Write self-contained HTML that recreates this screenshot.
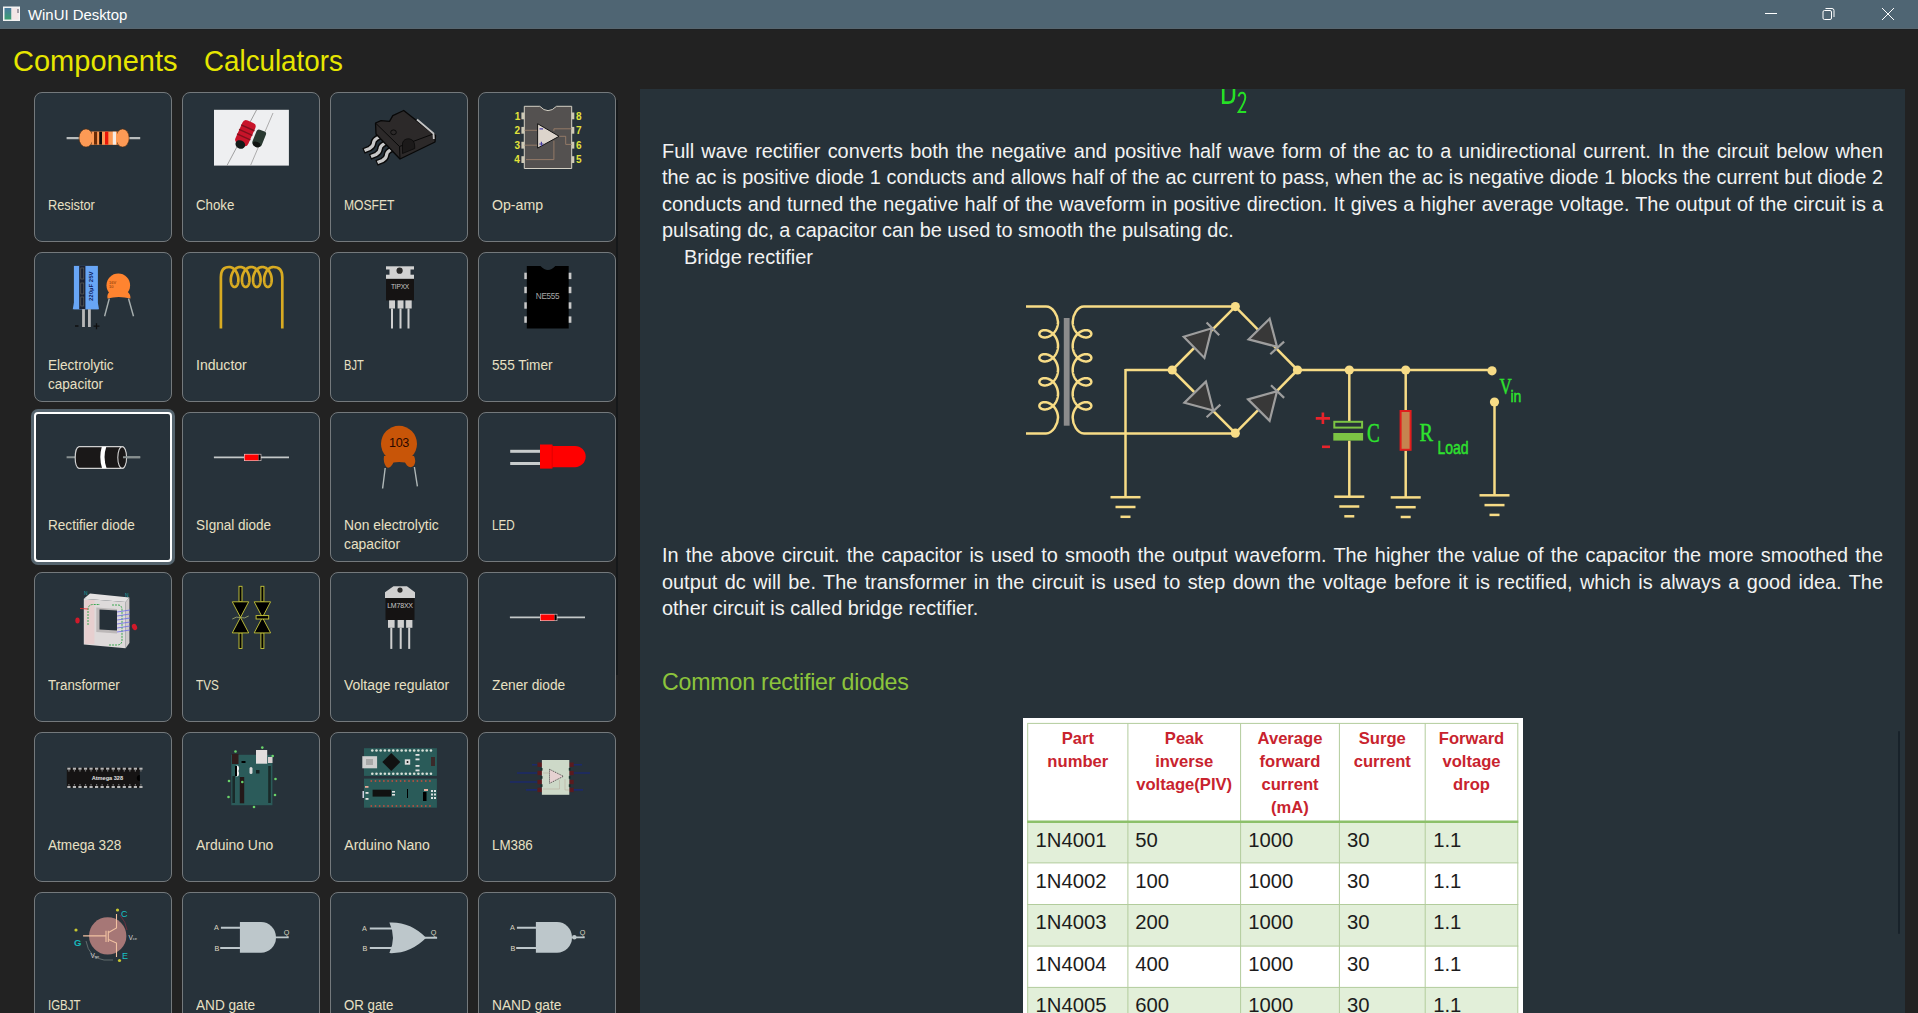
<!DOCTYPE html>
<html><head><meta charset="utf-8"><title>WinUI Desktop</title>
<style>
*{margin:0;padding:0;box-sizing:border-box}
html,body{width:1918px;height:1013px;overflow:hidden;background:#222222;font-family:"Liberation Sans",sans-serif}
.t{position:absolute;white-space:nowrap}
.card{position:absolute;width:138px;height:150px;border:1px solid #74797c;border-radius:8px;background:#27323a;overflow:hidden}
.card.sel{border:2px solid #ffffff;border-radius:4px;box-shadow:0 0 0 3px #56656f}
.lbl{position:absolute;left:13px;font-size:14px;line-height:18.6px;color:#e8e0c4;white-space:nowrap}
.card svg{position:absolute;left:0;top:0}
.para{position:absolute;left:662px;width:1221px;font-size:20px;line-height:26.4px;color:#f2f2f2}
.jl{display:block;text-align:justify;text-align-last:justify;white-space:nowrap}
</style></head><body>
<div style="position:absolute;left:0;top:0;width:1918px;height:29px;background:#4f6573"></div>
<div style="position:absolute;left:0;top:28px;width:1918px;height:1px;background:#58666f"></div>
<div style="position:absolute;left:0;top:29px;width:1918px;height:1px;background:#1c1f22"></div>
<svg style="position:absolute;left:0;top:0" width="30" height="29">
<rect x="3.5" y="7" width="16" height="13.5" fill="#eef0f0" stroke="#f4f4f4" stroke-width="1"/>
<defs><linearGradient id="ig" x1="0" y1="0" x2="0" y2="1"><stop offset="0" stop-color="#4a7aa0"/><stop offset="1" stop-color="#3aa070"/></linearGradient></defs>
<rect x="4.5" y="8" width="7" height="11.5" fill="url(#ig)"/>
<rect x="11.5" y="8" width="7" height="11.5" fill="#f2e6e6"/>
<rect x="17.5" y="9" width="1" height="4" fill="#556"/>
</svg>
<div class="t" style="left:28px;top:4.54px;font-size:14.9px;line-height:20px;color:#ffffff;">WinUI Desktop</div>
<svg style="position:absolute;left:1750px;top:0" width="168" height="29">
<line x1="15" y1="13.5" x2="27" y2="13.5" stroke="#ffffff" stroke-width="1"/>
<rect x="73" y="10.5" width="8.5" height="9" rx="1.5" fill="none" stroke="#ffffff" stroke-width="1"/>
<path d="M75.5 8.5 H82 a2 2 0 0 1 2 2 V17" fill="none" stroke="#ffffff" stroke-width="1"/>
<line x1="132" y1="8" x2="144" y2="20" stroke="#ffffff" stroke-width="1"/>
<line x1="144" y1="8" x2="132" y2="20" stroke="#ffffff" stroke-width="1"/>
</svg>
<div class="t" style="left:12.6px;top:43.01px;font-size:30px;line-height:36px;color:#e6e600;transform:scaleX(0.967);transform-origin:0 0;">Components</div>
<div class="t" style="left:204.3px;top:43.01px;font-size:30px;line-height:36px;color:#e6e600;transform:scaleX(0.925);transform-origin:0 0;">Calculators</div>
<div class="card" style="left:34px;top:92px"><svg width="138" height="150" style="left:-1px;top:-1px"><g transform="translate(-34,-92)">
<line x1="66.6" y1="138.1" x2="140.2" y2="138.1" stroke="#b8bcbc" stroke-width="2.4"/>
<rect x="84" y="131.7" width="40" height="12.9" fill="#fd9a55"/>
<ellipse cx="86" cy="138" rx="7" ry="9.1" fill="#fd9a55" stroke="#4a2a10" stroke-width="0.6"/>
<ellipse cx="122.6" cy="138" rx="6.6" ry="9.1" fill="#fd9a55" stroke="#4a2a10" stroke-width="0.6"/>
<rect x="92" y="131.7" width="25" height="12.9" fill="#fd9a55"/>
<rect x="94" y="131.7" width="3.1" height="12.9" fill="#6a2c08"/>
<rect x="99.2" y="131.7" width="2.8" height="12.9" fill="#0c0c0c"/>
<rect x="105" y="131.7" width="3.3" height="12.9" fill="#ea1608"/>
<rect x="112.8" y="131.7" width="3.2" height="12.9" fill="#f5ebe4"/>
</g></svg><div class="lbl" style="top:102.95px;left:13.3px;transform:scaleX(0.912);transform-origin:0 0">Resistor</div></div>
<div class="card" style="left:182px;top:92px"><svg width="138" height="150" style="left:-1px;top:-1px"><g transform="translate(-182,-92)">
<rect x="214" y="109.8" width="74.9" height="55.8" fill="#eeeff1"/>
<line x1="256.5" y1="110" x2="227" y2="165.5" stroke="#8a8a8a" stroke-width="0.8"/>
<line x1="273" y1="113" x2="250.5" y2="165.5" stroke="#9a9a9a" stroke-width="0.8"/>
<g transform="translate(245,134) rotate(24)">
<rect x="-7" y="-13.5" width="14" height="25" rx="4" fill="#c8142a"/>
<rect x="-7.3" y="-7.5" width="14.6" height="1.4" fill="#80101c"/>
<rect x="-7.3" y="-2.5" width="14.6" height="1.4" fill="#80101c"/>
<rect x="-7.3" y="2.5" width="14.6" height="1.4" fill="#80101c"/>
<ellipse cx="0" cy="11.5" rx="5" ry="4.2" fill="#141a18"/>
</g>
<g transform="translate(259,138.5) rotate(22)">
<rect x="-5" y="-8.5" width="10" height="16" rx="2.5" fill="#2a3a32"/>
<ellipse cx="0" cy="6.5" rx="4" ry="2.6" fill="#101412"/>
</g>
</g></svg><div class="lbl" style="top:102.95px;left:13.3px;transform:scaleX(0.949);transform-origin:0 0">Choke</div></div>
<div class="card" style="left:330px;top:92px"><svg width="138" height="150" style="left:-1px;top:-1px"><g transform="translate(-330,-92)">
<g stroke="#0a0a0a" stroke-linejoin="round">
<path d="M382.5,135 L376.5,138.5 Q373.5,140.5 373.5,143.5 Q373,146.5 369.5,148.5 L363.5,151" fill="none" stroke-width="6.2"/>
<path d="M389,141 L383,144.5 Q380,146.5 380,149.5 Q379.5,152.5 376,154.5 L370,157" fill="none" stroke-width="6.2"/>
<path d="M395.5,147 L389.5,150.5 Q386.5,152.5 386.5,155.5 Q386,158.5 382.5,160.5 L376.5,163" fill="none" stroke-width="6.2"/>
</g>
<g stroke="#c8c8c8" stroke-linecap="butt">
<path d="M381,135.8 L376.5,138.5 Q373.5,140.5 373.5,143.5 Q373,146.5 369.5,148.5 L364.5,150.6" fill="none" stroke-width="3.2"/>
<path d="M387.5,141.8 L383,144.5 Q380,146.5 380,149.5 Q379.5,152.5 376,154.5 L371,156.6" fill="none" stroke-width="3.2"/>
<path d="M394,147.8 L389.5,150.5 Q386.5,152.5 386.5,155.5 Q386,158.5 382.5,160.5 L377.5,162.6" fill="none" stroke-width="3.2"/>
</g>
<path d="M375.5,123 L381,120.6 L389.5,121.4 L392.8,115.6 L403.7,110.5 L435.5,135.5 L435,142 L400,159 L376,134 Z" fill="#2c2929" stroke="#080808" stroke-width="1.3" stroke-linejoin="round"/>
<path d="M376,123.5 L399.5,146.5 L434.5,133.5" fill="none" stroke="#080808" stroke-width="1"/>
<line x1="399.5" y1="146.5" x2="400" y2="159" stroke="#080808" stroke-width="1"/>
<path d="M417,119.5 L433.5,133.5 L433.8,139" fill="none" stroke="#c4c4c4" stroke-width="1.8"/>
<ellipse cx="393.5" cy="132.3" rx="2.8" ry="2.4" fill="none" stroke="#0a0a0a" stroke-width="1"/>
<path d="M402.5,153.5 L402.5,143 Q404,138.5 409,138.8 Q414.5,139.5 414.7,146 L414.7,148.5 Z" fill="#1c1a1a" stroke="#0a0a0a" stroke-width="0.8"/>
</g></svg><div class="lbl" style="top:102.95px;left:13.3px;transform:scaleX(0.866);transform-origin:0 0">MOSFET</div></div>
<div class="card" style="left:478px;top:92px"><svg width="138" height="150" style="left:-1px;top:-1px"><g transform="translate(-478,-92)"><path d="M524.3,106.3 H539.8 Q548,115 556.5,106.3 H571.7 V168.5 H524.3 Z" fill="#545150" stroke="#d4d0c4" stroke-width="1"/><rect x="521.4" y="112.5" width="2.9" height="6.8" fill="#cfcab6"/><rect x="571.7" y="112.5" width="2.6" height="6.8" fill="#cfcab6"/><rect x="521.4" y="126.9" width="2.9" height="6.8" fill="#cfcab6"/><rect x="571.7" y="126.9" width="2.6" height="6.8" fill="#cfcab6"/><rect x="521.4" y="141.79999999999998" width="2.9" height="6.8" fill="#cfcab6"/><rect x="571.7" y="141.79999999999998" width="2.6" height="6.8" fill="#cfcab6"/><rect x="521.4" y="156.2" width="2.9" height="6.8" fill="#cfcab6"/><rect x="571.7" y="156.2" width="2.6" height="6.8" fill="#cfcab6"/><path d="M524.5,130.3 H537.6 M524.5,145.2 H537.6 M526,159.6 H553.9 V140.7 M553.9,128.8 H571.7 M559,136.3 H565.7 V144.4 H571.7 M553.9,128.8 V131" fill="none" stroke="#9a7e6a" stroke-width="0.9"/><path d="M537.6,123.7 V148.1 L559.1,136.3 Z" fill="#dcd4cc" stroke="#151515" stroke-width="1"/><path d="M539.5,128.8 H543" stroke="#4a40a0" stroke-width="1.2"/><path d="M539.3,144 H543.5 M541.4,141.8 V146.2" stroke="#4a40a0" stroke-width="1.2"/><text x="517.5" y="119.5" text-anchor="middle" font-family="Liberation Sans" font-weight="bold" font-size="10" fill="#e2e23a">1</text><text x="517.3" y="134" text-anchor="middle" font-family="Liberation Sans" font-weight="bold" font-size="10" fill="#e2e23a">2</text><text x="517.3" y="149" text-anchor="middle" font-family="Liberation Sans" font-weight="bold" font-size="10" fill="#e2e23a">3</text><text x="517" y="163.2" text-anchor="middle" font-family="Liberation Sans" font-weight="bold" font-size="10" fill="#e2e23a">4</text><text x="578.8" y="119.5" text-anchor="middle" font-family="Liberation Sans" font-weight="bold" font-size="10" fill="#e2e23a">8</text><text x="578.8" y="134" text-anchor="middle" font-family="Liberation Sans" font-weight="bold" font-size="10" fill="#e2e23a">7</text><text x="578.8" y="149" text-anchor="middle" font-family="Liberation Sans" font-weight="bold" font-size="10" fill="#e2e23a">6</text><text x="578.8" y="163.2" text-anchor="middle" font-family="Liberation Sans" font-weight="bold" font-size="10" fill="#e2e23a">5</text></g></svg><div class="lbl" style="top:102.95px;left:13.3px;transform:scaleX(1.010);transform-origin:0 0">Op-amp</div></div>
<div class="card" style="left:34px;top:252px"><svg width="138" height="150" style="left:-1px;top:-1px"><g transform="translate(-34,-252)">
<rect x="73.9" y="265.9" width="24" height="43.3" fill="#68a6f6"/>
<path d="M73.9,303 L72.8,309.2 H99 L97.9,303 Z" fill="#68a6f6"/>
<rect x="79.2" y="265.9" width="6.2" height="43.3" fill="#1c2232"/>
<rect x="80.8" y="268" width="3" height="11" fill="none" stroke="#6a6a60" stroke-width="0.6"/>
<rect x="80.8" y="283" width="3" height="11" fill="none" stroke="#6a6a60" stroke-width="0.6"/>
<rect x="80.8" y="297" width="3" height="9" fill="none" stroke="#6a6a60" stroke-width="0.6"/>
<text transform="translate(93.2,301) rotate(-90)" font-family="Liberation Sans" font-weight="bold" font-size="6" fill="#10205a">220µF 25V</text>
<rect x="82.1" y="309.2" width="2.8" height="17.8" fill="#b8b8b8"/>
<rect x="88" y="309.2" width="2.8" height="17.8" fill="#b8b8b8"/>
<path d="M75,326 H78.5 M93.5,326.2 H99.5 M96.5,323.2 V329.2" stroke="#101010" stroke-width="1.3"/>
<line x1="109.3" y1="298.5" x2="104.6" y2="316.3" stroke="#a8b0b0" stroke-width="1.4"/>
<line x1="128.5" y1="298.5" x2="133.5" y2="316.3" stroke="#a8b0b0" stroke-width="1.4"/>
<circle cx="118.3" cy="285.3" r="11.8" fill="#ff8430"/>
<path d="M107.5,298.5 Q106.5,293 111,291 Q118.5,293 126,291 Q130.7,293 130.5,298.5 Q118.5,295.5 107.5,298.5 Z" fill="#ff8430"/>
<text x="109" y="284" font-family="Liberation Sans" font-size="4" fill="#7a3000">16V</text>
<text x="109" y="287.5" font-family="Liberation Sans" font-size="4" fill="#7a3000">10</text>
</g></svg><div class="lbl" style="top:102.95px;left:13.3px;transform:scaleX(0.968);transform-origin:0 0">Electrolytic<br>capacitor</div></div>
<div class="card" style="left:182px;top:252px"><svg width="138" height="150" style="left:-1px;top:-1px"><g transform="translate(-182,-252)"><path d="M220.9,328.5 V277.0 Q220.9,267.00 229.05,267.00 L229.46,267.01 L229.86,267.05 L230.26,267.11 L230.66,267.20 L231.06,267.31 L231.45,267.45 L231.84,267.61 L232.23,267.80 L232.60,268.01 L232.97,268.24 L233.34,268.49 L233.69,268.76 L234.03,269.06 L234.37,269.38 L234.69,269.71 L235.01,270.06 L235.31,270.43 L235.60,270.82 L235.88,271.22 L236.15,271.64 L236.40,272.07 L236.63,272.52 L236.86,272.97 L237.07,273.44 L237.26,273.91 L237.44,274.39 L237.60,274.88 L237.75,275.37 L237.88,275.87 L238.00,276.37 L238.10,276.87 L238.19,277.38 L238.26,277.88 L238.31,278.38 L238.35,278.87 L238.37,279.36 L238.37,279.85 L238.37,280.33 L238.34,280.80 L238.30,281.26 L238.25,281.71 L238.18,282.14 L238.10,282.57 L238.01,282.98 L237.90,283.37 L237.78,283.75 L237.65,284.12 L237.51,284.46 L237.36,284.78 L237.19,285.09 L237.02,285.38 L236.84,285.64 L236.65,285.88 L236.46,286.10 L236.25,286.30 L236.04,286.47 L235.83,286.62 L235.61,286.75 L235.39,286.85 L235.17,286.92 L234.94,286.97 L234.71,287.00 L234.49,287.00 L234.26,286.97 L234.03,286.92 L233.81,286.85 L233.59,286.75 L233.37,286.62 L233.16,286.47 L232.95,286.30 L232.74,286.10 L232.55,285.88 L232.36,285.64 L232.18,285.38 L232.01,285.09 L231.84,284.78 L231.69,284.46 L231.55,284.12 L231.42,283.75 L231.30,283.37 L231.19,282.98 L231.10,282.57 L231.02,282.14 L230.95,281.71 L230.90,281.26 L230.86,280.80 L230.83,280.33 L230.83,279.85 L230.83,279.36 L230.85,278.87 L230.89,278.38 L230.94,277.88 L231.01,277.38 L231.10,276.87 L231.20,276.37 L231.32,275.87 L231.45,275.37 L231.60,274.88 L231.76,274.39 L231.94,273.91 L232.13,273.44 L232.34,272.97 L232.57,272.52 L232.80,272.07 L233.05,271.64 L233.32,271.22 L233.60,270.82 L233.89,270.43 L234.19,270.06 L234.51,269.71 L234.83,269.38 L235.17,269.06 L235.51,268.76 L235.86,268.49 L236.23,268.24 L236.60,268.01 L236.97,267.80 L237.36,267.61 L237.75,267.45 L238.14,267.31 L238.54,267.20 L238.94,267.11 L239.34,267.05 L239.74,267.01 L240.15,267.00 L240.56,267.01 L240.96,267.05 L241.36,267.11 L241.76,267.20 L242.16,267.31 L242.55,267.45 L242.94,267.61 L243.33,267.80 L243.70,268.01 L244.07,268.24 L244.44,268.49 L244.79,268.76 L245.13,269.06 L245.47,269.38 L245.79,269.71 L246.11,270.06 L246.41,270.43 L246.70,270.82 L246.98,271.22 L247.25,271.64 L247.50,272.07 L247.73,272.52 L247.96,272.97 L248.17,273.44 L248.36,273.91 L248.54,274.39 L248.70,274.88 L248.85,275.37 L248.98,275.87 L249.10,276.37 L249.20,276.87 L249.29,277.38 L249.36,277.88 L249.41,278.38 L249.45,278.87 L249.47,279.36 L249.47,279.85 L249.47,280.33 L249.44,280.80 L249.40,281.26 L249.35,281.71 L249.28,282.14 L249.20,282.57 L249.11,282.98 L249.00,283.37 L248.88,283.75 L248.75,284.12 L248.61,284.46 L248.46,284.78 L248.29,285.09 L248.12,285.38 L247.94,285.64 L247.75,285.88 L247.56,286.10 L247.35,286.30 L247.14,286.47 L246.93,286.62 L246.71,286.75 L246.49,286.85 L246.27,286.92 L246.04,286.97 L245.81,287.00 L245.59,287.00 L245.36,286.97 L245.13,286.92 L244.91,286.85 L244.69,286.75 L244.47,286.62 L244.26,286.47 L244.05,286.30 L243.84,286.10 L243.65,285.88 L243.46,285.64 L243.28,285.38 L243.11,285.09 L242.94,284.78 L242.79,284.46 L242.65,284.12 L242.52,283.75 L242.40,283.37 L242.29,282.98 L242.20,282.57 L242.12,282.14 L242.05,281.71 L242.00,281.26 L241.96,280.80 L241.93,280.33 L241.93,279.85 L241.93,279.36 L241.95,278.87 L241.99,278.38 L242.04,277.88 L242.11,277.38 L242.20,276.87 L242.30,276.37 L242.42,275.87 L242.55,275.37 L242.70,274.88 L242.86,274.39 L243.04,273.91 L243.23,273.44 L243.44,272.97 L243.67,272.52 L243.90,272.07 L244.15,271.64 L244.42,271.22 L244.70,270.82 L244.99,270.43 L245.29,270.06 L245.61,269.71 L245.93,269.38 L246.27,269.06 L246.61,268.76 L246.96,268.49 L247.33,268.24 L247.70,268.01 L248.07,267.80 L248.46,267.61 L248.85,267.45 L249.24,267.31 L249.64,267.20 L250.04,267.11 L250.44,267.05 L250.84,267.01 L251.25,267.00 L251.66,267.01 L252.06,267.05 L252.46,267.11 L252.86,267.20 L253.26,267.31 L253.65,267.45 L254.04,267.61 L254.43,267.80 L254.80,268.01 L255.17,268.24 L255.54,268.49 L255.89,268.76 L256.23,269.06 L256.57,269.38 L256.89,269.71 L257.21,270.06 L257.51,270.43 L257.80,270.82 L258.08,271.22 L258.35,271.64 L258.60,272.07 L258.83,272.52 L259.06,272.97 L259.27,273.44 L259.46,273.91 L259.64,274.39 L259.80,274.88 L259.95,275.37 L260.08,275.87 L260.20,276.37 L260.30,276.87 L260.39,277.38 L260.46,277.88 L260.51,278.38 L260.55,278.87 L260.57,279.36 L260.57,279.85 L260.57,280.33 L260.54,280.80 L260.50,281.26 L260.45,281.71 L260.38,282.14 L260.30,282.57 L260.21,282.98 L260.10,283.37 L259.98,283.75 L259.85,284.12 L259.71,284.46 L259.56,284.78 L259.39,285.09 L259.22,285.38 L259.04,285.64 L258.85,285.88 L258.66,286.10 L258.45,286.30 L258.24,286.47 L258.03,286.62 L257.81,286.75 L257.59,286.85 L257.37,286.92 L257.14,286.97 L256.91,287.00 L256.69,287.00 L256.46,286.97 L256.23,286.92 L256.01,286.85 L255.79,286.75 L255.57,286.62 L255.36,286.47 L255.15,286.30 L254.94,286.10 L254.75,285.88 L254.56,285.64 L254.38,285.38 L254.21,285.09 L254.04,284.78 L253.89,284.46 L253.75,284.12 L253.62,283.75 L253.50,283.37 L253.39,282.98 L253.30,282.57 L253.22,282.14 L253.15,281.71 L253.10,281.26 L253.06,280.80 L253.03,280.33 L253.03,279.85 L253.03,279.36 L253.05,278.87 L253.09,278.38 L253.14,277.88 L253.21,277.38 L253.30,276.87 L253.40,276.37 L253.52,275.87 L253.65,275.37 L253.80,274.88 L253.96,274.39 L254.14,273.91 L254.33,273.44 L254.54,272.97 L254.77,272.52 L255.00,272.07 L255.25,271.64 L255.52,271.22 L255.80,270.82 L256.09,270.43 L256.39,270.06 L256.71,269.71 L257.03,269.38 L257.37,269.06 L257.71,268.76 L258.06,268.49 L258.43,268.24 L258.80,268.01 L259.17,267.80 L259.56,267.61 L259.95,267.45 L260.34,267.31 L260.74,267.20 L261.14,267.11 L261.54,267.05 L261.94,267.01 L262.35,267.00 L262.76,267.01 L263.16,267.05 L263.56,267.11 L263.96,267.20 L264.36,267.31 L264.75,267.45 L265.14,267.61 L265.53,267.80 L265.90,268.01 L266.27,268.24 L266.64,268.49 L266.99,268.76 L267.33,269.06 L267.67,269.38 L267.99,269.71 L268.31,270.06 L268.61,270.43 L268.90,270.82 L269.18,271.22 L269.45,271.64 L269.70,272.07 L269.93,272.52 L270.16,272.97 L270.37,273.44 L270.56,273.91 L270.74,274.39 L270.90,274.88 L271.05,275.37 L271.18,275.87 L271.30,276.37 L271.40,276.87 L271.49,277.38 L271.56,277.88 L271.61,278.38 L271.65,278.87 L271.67,279.36 L271.67,279.85 L271.67,280.33 L271.64,280.80 L271.60,281.26 L271.55,281.71 L271.48,282.14 L271.40,282.57 L271.31,282.98 L271.20,283.37 L271.08,283.75 L270.95,284.12 L270.81,284.46 L270.66,284.78 L270.49,285.09 L270.32,285.38 L270.14,285.64 L269.95,285.88 L269.76,286.10 L269.55,286.30 L269.34,286.47 L269.13,286.62 L268.91,286.75 L268.69,286.85 L268.47,286.92 L268.24,286.97 L268.01,287.00 L267.79,287.00 L267.56,286.97 L267.33,286.92 L267.11,286.85 L266.89,286.75 L266.67,286.62 L266.46,286.47 L266.25,286.30 L266.04,286.10 L265.85,285.88 L265.66,285.64 L265.48,285.38 L265.31,285.09 L265.14,284.78 L264.99,284.46 L264.85,284.12 L264.72,283.75 L264.60,283.37 L264.49,282.98 L264.40,282.57 L264.32,282.14 L264.25,281.71 L264.20,281.26 L264.16,280.80 L264.13,280.33 L264.13,279.85 L264.13,279.36 L264.15,278.87 L264.19,278.38 L264.24,277.88 L264.31,277.38 L264.40,276.87 L264.50,276.37 L264.62,275.87 L264.75,275.37 L264.90,274.88 L265.06,274.39 L265.24,273.91 L265.43,273.44 L265.64,272.97 L265.87,272.52 L266.10,272.07 L266.35,271.64 L266.62,271.22 L266.90,270.82 L267.19,270.43 L267.49,270.06 L267.81,269.71 L268.13,269.38 L268.47,269.06 L268.81,268.76 L269.16,268.49 L269.53,268.24 L269.90,268.01 L270.27,267.80 L270.66,267.61 L271.05,267.45 L271.44,267.31 L271.84,267.20 L272.24,267.11 L272.64,267.05 L273.04,267.01 L273.45,267.00 Q282.3,267.00 282.3,277.0 V328.5" fill="none" stroke="#d8ab22" stroke-width="2.7"/></g></svg><div class="lbl" style="top:102.95px;left:13.3px;transform:scaleX(1.004);transform-origin:0 0">Inductor</div></div>
<div class="card" style="left:330px;top:252px"><svg width="138" height="150" style="left:-1px;top:-1px"><g transform="translate(-330,-252)"><rect x="386" y="266.3" width="28" height="12.599999999999966" fill="#d2d2d2"/><rect x="386" y="269.5" width="3.5" height="5.2" fill="#263038"/><rect x="410.5" y="269.5" width="3.5" height="5.2" fill="#263038"/><circle cx="399.6" cy="270.7" r="3.1" fill="#2a2a2a"/><rect x="386" y="278.9" width="28" height="21.5" fill="#151313"/><text x="400" y="288.7" text-anchor="middle" font-family="Liberation Sans" font-size="6.6" fill="#c8c8c8" letter-spacing="-0.2">TIPXX</text><rect x="389.1" y="300.4" width="5.899999999999977" height="8.100000000000023" fill="#cfcfcf"/><rect x="391" y="308.5" width="2" height="20.0" fill="#cfcfcf"/><rect x="397.6" y="300.4" width="5.899999999999977" height="8.100000000000023" fill="#cfcfcf"/><rect x="399.5" y="308.5" width="2" height="20.0" fill="#cfcfcf"/><rect x="405.4" y="300.4" width="6.300000000000011" height="8.100000000000023" fill="#cfcfcf"/><rect x="407.5" y="308.5" width="2" height="20.0" fill="#cfcfcf"/></g></svg><div class="lbl" style="top:102.95px;left:13.3px;transform:scaleX(0.791);transform-origin:0 0">BJT</div></div>
<div class="card" style="left:478px;top:252px"><svg width="138" height="150" style="left:-1px;top:-1px"><g transform="translate(-478,-252)"><path d="M526.8,265.9 H540.5 Q548,274 555.3,265.9 H568.7 V328.5 H526.8 Z" fill="#000000"/><rect x="524.3" y="272.7" width="2.5" height="6.4" fill="#c8c8c8"/><rect x="568.7" y="272.7" width="2.7" height="6.4" fill="#c8c8c8"/><rect x="524.3" y="286.8" width="2.5" height="6.4" fill="#c8c8c8"/><rect x="568.7" y="286.8" width="2.7" height="6.4" fill="#c8c8c8"/><rect x="524.3" y="302.3" width="2.5" height="6.4" fill="#c8c8c8"/><rect x="568.7" y="302.3" width="2.7" height="6.4" fill="#c8c8c8"/><rect x="524.3" y="316.40000000000003" width="2.5" height="6.4" fill="#c8c8c8"/><rect x="568.7" y="316.40000000000003" width="2.7" height="6.4" fill="#c8c8c8"/><text x="547.6" y="299.3" text-anchor="middle" font-family="Liberation Sans" font-size="8.2" fill="#a8a8a8" letter-spacing="-0.3">NE555</text></g></svg><div class="lbl" style="top:102.95px;left:13.3px;transform:scaleX(0.972);transform-origin:0 0">555 Timer</div></div>
<div class="card sel" style="left:34px;top:412px"><svg width="138" height="150" style="left:-2px;top:-2px"><g transform="translate(-34,-412)">
<line x1="66.6" y1="457.3" x2="140.2" y2="457.3" stroke="#889090" stroke-width="2"/>
<path d="M79,446.6 H122.2 A4.4,11 0 0 1 122.2,468.4 H79 A4.4,11 0 0 1 79,446.6 Z" fill="#1a1818" stroke="#cfcfcf" stroke-width="1.2"/>
<ellipse cx="122.2" cy="457.5" rx="4.4" ry="10.9" fill="#1a1818" stroke="#cfcfcf" stroke-width="1.1"/>
<line x1="123" y1="457.3" x2="140.2" y2="457.3" stroke="#889090" stroke-width="2"/>
<path d="M101.8,446.8 H106.3 Q102.6,457.5 106.6,468.2 H102.1 Q98.6,457.5 101.8,446.8 Z" fill="#ffffff"/>
</g></svg><div class="lbl" style="top:101.95px;left:12.3px;transform:scaleX(0.970);transform-origin:0 0">Rectifier diode</div></div>
<div class="card" style="left:182px;top:412px"><svg width="138" height="150" style="left:-1px;top:-1px"><g transform="translate(-182,-412)"><line x1="213.9" y1="457.4" x2="289" y2="457.4" stroke="#c4c8c8" stroke-width="1.9"/><rect x="244" y="453.9" width="17.3" height="7.1" fill="#e8d8d8"/><rect x="244.6" y="454.5" width="13.9" height="5.9" fill="#ff0000"/><rect x="258.5" y="454.5" width="2.2" height="5.9" fill="#000000"/></g></svg><div class="lbl" style="top:102.95px;left:13.3px;transform:scaleX(0.964);transform-origin:0 0">SIgnal diode</div></div>
<div class="card" style="left:330px;top:412px"><svg width="138" height="150" style="left:-1px;top:-1px"><g transform="translate(-330,-412)">
<line x1="385.2" y1="468" x2="382.6" y2="488.5" stroke="#b0b8b8" stroke-width="1.4"/>
<line x1="414.4" y1="467" x2="417.4" y2="486.3" stroke="#b0b8b8" stroke-width="1.4"/>
<circle cx="399" cy="443.8" r="18" fill="#c85508"/>
<path d="M384,456 Q383,462 386,466.5 Q389,469.5 392,465 L393.5,462.5 Q399,461.5 405,462.5 L407,465.5 Q410.5,469 414,465.5 Q416.5,461 414,456 Z" fill="#c85508"/>
<text x="399" y="446.5" text-anchor="middle" font-family="Liberation Sans" font-size="12.6" fill="#2a0800" letter-spacing="-0.3">103</text>
</g></svg><div class="lbl" style="top:102.95px;left:13.3px;transform:scaleX(0.989);transform-origin:0 0">Non electrolytic<br>capacitor</div></div>
<div class="card" style="left:478px;top:412px"><svg width="138" height="150" style="left:-1px;top:-1px"><g transform="translate(-478,-412)">
<rect x="510.2" y="449.8" width="30" height="3" fill="#c8cccc"/>
<rect x="510.2" y="462" width="30" height="3" fill="#c8cccc"/>
<rect x="540" y="444.5" width="12.4" height="24.1" fill="#ff0000"/>
<path d="M552,445.9 H575 A10.7,10.65 0 0 1 575,467.2 H552 Z" fill="#ff0000"/>
<line x1="552.2" y1="445" x2="552.2" y2="468" stroke="#d80000" stroke-width="0.8"/>
</g></svg><div class="lbl" style="top:102.95px;left:13.3px;transform:scaleX(0.834);transform-origin:0 0">LED</div></div>
<div class="card" style="left:34px;top:572px"><svg width="138" height="150" style="left:-1px;top:-1px"><g transform="translate(-34,-572)">
<path d="M83.8,598.8 L90,593.6 L129.4,597.4 L125.6,601.9 Z" fill="#e4e2e2"/>
<path d="M125.6,601.9 L129.4,597.4 L129.4,643 L125.6,648.2 Z" fill="#cfcaca"/>
<path d="M83.8,598.8 L125.6,601.9 L125.6,648.2 L83.8,644.4 Z" fill="#dedada"/>
<rect x="84.5" y="600" width="10" height="44" fill="#e9cccc" opacity="0.8"/>
<path d="M96.3,607.5 L117,609 L117,633.4 L96.3,632 Z" fill="#bcb8b8"/>
<path d="M99.5,609.5 L117,610.5 L117,630.5 L99.5,629.5 Z" fill="#263038"/>
<path d="M88,625 V610 Q88,604.5 93,604.5 H100" fill="none" stroke="#3aa850" stroke-width="1" stroke-dasharray="2,1"/>
<path d="M112,605 H118 Q122,605 122,610 V640 Q122,645 117,645 H108" fill="none" stroke="#3aa850" stroke-width="1" stroke-dasharray="2,1"/>
<g stroke="#6a6ae8" stroke-width="0.8">
<line x1="117" y1="612" x2="130" y2="610"/><line x1="117" y1="616" x2="130" y2="614"/><line x1="117" y1="620" x2="130" y2="618"/>
<line x1="117" y1="624" x2="130" y2="622"/><line x1="117" y1="628" x2="130" y2="626"/><line x1="117" y1="632" x2="130" y2="630"/>
</g>
<line x1="80" y1="608.5" x2="88" y2="609" stroke="#e03030" stroke-width="0.9"/>
<ellipse cx="77.5" cy="620.5" rx="2.2" ry="3" fill="#d01a2a"/>
<ellipse cx="134.5" cy="627" rx="2.5" ry="3.2" fill="#d01a2a" transform="rotate(-25 134.5 627)"/>
<text x="84" y="595" font-family="Liberation Sans" font-size="5" fill="#1aa0a0">N</text>
<text x="125" y="597" font-family="Liberation Sans" font-size="5" fill="#1aa0a0">N</text>
</g></svg><div class="lbl" style="top:102.95px;left:13.3px;transform:scaleX(0.947);transform-origin:0 0">Transformer</div></div>
<div class="card" style="left:182px;top:572px"><svg width="138" height="150" style="left:-1px;top:-1px"><g transform="translate(-182,-572)"><rect x="239.0" y="586.3" width="3" height="15.5" fill="#000" stroke="#c8c83a" stroke-width="0.9"/><rect x="239.0" y="632.9" width="3" height="15.6" fill="#000" stroke="#c8c83a" stroke-width="0.9"/><path d="M232.3,601.8 H248.7 L240.5,617.4 Z" fill="#000" stroke="#c8c83a" stroke-width="0.9"/><path d="M232.3,632.9 H248.7 L240.5,617.4 Z" fill="#000" stroke="#c8c83a" stroke-width="0.9"/><path d="M232.3,619 Q236.5,616 240.5,617.6 Q244.5,619 248.7,616" fill="none" stroke="#a8b070" stroke-width="0.8"/><rect x="260.9" y="586.3" width="3" height="15.5" fill="#000" stroke="#c8c83a" stroke-width="0.9"/><rect x="260.9" y="632.9" width="3" height="15.6" fill="#000" stroke="#c8c83a" stroke-width="0.9"/><path d="M254.2,601.8 H270.59999999999997 L262.4,617.4 Z" fill="#000" stroke="#c8c83a" stroke-width="0.9"/><path d="M254.2,632.9 H270.59999999999997 L262.4,617.4 Z" fill="#000" stroke="#c8c83a" stroke-width="0.9"/><rect x="256.09999999999997" y="615.6" width="12.6" height="3.4" fill="#000" stroke="#c8c83a" stroke-width="0.9"/></g></svg><div class="lbl" style="top:102.95px;left:13.3px;transform:scaleX(0.834);transform-origin:0 0">TVS</div></div>
<div class="card" style="left:330px;top:572px"><svg width="138" height="150" style="left:-1px;top:-1px"><g transform="translate(-330,-572)"><path d="M385,592.1999999999999 L393.5,586.3 H406.9 L415,592.1999999999999 V598.1 H385 Z" fill="#d0d0d0"/><circle cx="400" cy="590.0999999999999" r="2.6" fill="#2a2a2a"/><rect x="385.5" y="598.1" width="29" height="21.899999999999977" fill="#151313"/><text x="400" y="607.9" text-anchor="middle" font-family="Liberation Sans" font-size="7" fill="#c8c8c8" letter-spacing="-0.2">LM78XX</text><rect x="388" y="620" width="6.600000000000023" height="7.7999999999999545" fill="#cfcfcf"/><rect x="390.3" y="627.8" width="2" height="21.100000000000023" fill="#cfcfcf"/><rect x="397.6" y="620" width="6.2999999999999545" height="7.7999999999999545" fill="#cfcfcf"/><rect x="399.7" y="627.8" width="2" height="21.100000000000023" fill="#cfcfcf"/><rect x="406.1" y="620" width="6.2999999999999545" height="7.7999999999999545" fill="#cfcfcf"/><rect x="408.2" y="627.8" width="2" height="21.100000000000023" fill="#cfcfcf"/></g></svg><div class="lbl" style="top:102.95px;left:13.3px;transform:scaleX(0.994);transform-origin:0 0">Voltage regulator</div></div>
<div class="card" style="left:478px;top:572px"><svg width="138" height="150" style="left:-1px;top:-1px"><g transform="translate(-478,-572)"><line x1="509.9" y1="617.4" x2="585" y2="617.4" stroke="#c4c8c8" stroke-width="1.9"/><rect x="540" y="613.9" width="17.3" height="7.1" fill="#e8d8d8"/><rect x="540.6" y="614.5" width="13.9" height="5.9" fill="#ff0000"/><rect x="554.5" y="614.5" width="2.2" height="5.9" fill="#000000"/></g></svg><div class="lbl" style="top:102.95px;left:13.3px;transform:scaleX(0.980);transform-origin:0 0">Zener diode</div></div>
<div class="card" style="left:34px;top:732px"><svg width="138" height="150" style="left:-1px;top:-1px"><g transform="translate(-34,-732)"><rect x="66.8" y="767.7" width="73" height="20.2" fill="#161414"/><rect x="67.30000000000001" y="767.7" width="3.2" height="2" fill="#b8b8b8"/><rect x="67.30000000000001" y="786" width="3.2" height="2" fill="#b8b8b8"/><rect x="68.30000000000001" y="770" width="1.2" height="1.6" fill="#707070"/><rect x="68.30000000000001" y="784" width="1.2" height="1.6" fill="#707070"/><rect x="72.84000000000002" y="767.7" width="3.2" height="2" fill="#b8b8b8"/><rect x="72.84000000000002" y="786" width="3.2" height="2" fill="#b8b8b8"/><rect x="73.84000000000002" y="770" width="1.2" height="1.6" fill="#707070"/><rect x="73.84000000000002" y="784" width="1.2" height="1.6" fill="#707070"/><rect x="78.38000000000001" y="767.7" width="3.2" height="2" fill="#b8b8b8"/><rect x="78.38000000000001" y="786" width="3.2" height="2" fill="#b8b8b8"/><rect x="79.38000000000001" y="770" width="1.2" height="1.6" fill="#707070"/><rect x="79.38000000000001" y="784" width="1.2" height="1.6" fill="#707070"/><rect x="83.92000000000002" y="767.7" width="3.2" height="2" fill="#b8b8b8"/><rect x="83.92000000000002" y="786" width="3.2" height="2" fill="#b8b8b8"/><rect x="84.92000000000002" y="770" width="1.2" height="1.6" fill="#707070"/><rect x="84.92000000000002" y="784" width="1.2" height="1.6" fill="#707070"/><rect x="89.46000000000001" y="767.7" width="3.2" height="2" fill="#b8b8b8"/><rect x="89.46000000000001" y="786" width="3.2" height="2" fill="#b8b8b8"/><rect x="90.46000000000001" y="770" width="1.2" height="1.6" fill="#707070"/><rect x="90.46000000000001" y="784" width="1.2" height="1.6" fill="#707070"/><rect x="95.00000000000001" y="767.7" width="3.2" height="2" fill="#b8b8b8"/><rect x="95.00000000000001" y="786" width="3.2" height="2" fill="#b8b8b8"/><rect x="96.00000000000001" y="770" width="1.2" height="1.6" fill="#707070"/><rect x="96.00000000000001" y="784" width="1.2" height="1.6" fill="#707070"/><rect x="100.54000000000002" y="767.7" width="3.2" height="2" fill="#b8b8b8"/><rect x="100.54000000000002" y="786" width="3.2" height="2" fill="#b8b8b8"/><rect x="101.54000000000002" y="770" width="1.2" height="1.6" fill="#707070"/><rect x="101.54000000000002" y="784" width="1.2" height="1.6" fill="#707070"/><rect x="106.08000000000001" y="767.7" width="3.2" height="2" fill="#b8b8b8"/><rect x="106.08000000000001" y="786" width="3.2" height="2" fill="#b8b8b8"/><rect x="107.08000000000001" y="770" width="1.2" height="1.6" fill="#707070"/><rect x="107.08000000000001" y="784" width="1.2" height="1.6" fill="#707070"/><rect x="111.62" y="767.7" width="3.2" height="2" fill="#b8b8b8"/><rect x="111.62" y="786" width="3.2" height="2" fill="#b8b8b8"/><rect x="112.62" y="770" width="1.2" height="1.6" fill="#707070"/><rect x="112.62" y="784" width="1.2" height="1.6" fill="#707070"/><rect x="117.16000000000001" y="767.7" width="3.2" height="2" fill="#b8b8b8"/><rect x="117.16000000000001" y="786" width="3.2" height="2" fill="#b8b8b8"/><rect x="118.16000000000001" y="770" width="1.2" height="1.6" fill="#707070"/><rect x="118.16000000000001" y="784" width="1.2" height="1.6" fill="#707070"/><rect x="122.70000000000002" y="767.7" width="3.2" height="2" fill="#b8b8b8"/><rect x="122.70000000000002" y="786" width="3.2" height="2" fill="#b8b8b8"/><rect x="123.70000000000002" y="770" width="1.2" height="1.6" fill="#707070"/><rect x="123.70000000000002" y="784" width="1.2" height="1.6" fill="#707070"/><rect x="128.24" y="767.7" width="3.2" height="2" fill="#b8b8b8"/><rect x="128.24" y="786" width="3.2" height="2" fill="#b8b8b8"/><rect x="129.24" y="770" width="1.2" height="1.6" fill="#707070"/><rect x="129.24" y="784" width="1.2" height="1.6" fill="#707070"/><rect x="133.78" y="767.7" width="3.2" height="2" fill="#b8b8b8"/><rect x="133.78" y="786" width="3.2" height="2" fill="#b8b8b8"/><rect x="134.78" y="770" width="1.2" height="1.6" fill="#707070"/><rect x="134.78" y="784" width="1.2" height="1.6" fill="#707070"/><rect x="139.32000000000002" y="767.7" width="3.2" height="2" fill="#b8b8b8"/><rect x="139.32000000000002" y="786" width="3.2" height="2" fill="#b8b8b8"/><rect x="140.32000000000002" y="770" width="1.2" height="1.6" fill="#707070"/><rect x="140.32000000000002" y="784" width="1.2" height="1.6" fill="#707070"/><path d="M139.8,775 A3,3 0 0 0 139.8,781" fill="#000"/><text x="107.4" y="779.8" text-anchor="middle" font-family="Liberation Sans" font-weight="bold" font-size="5.6" fill="#e0e0e0">Atmega 328</text></g></svg><div class="lbl" style="top:102.95px;left:13.3px;transform:scaleX(0.970);transform-origin:0 0">Atmega 328</div></div>
<div class="card" style="left:182px;top:732px"><svg width="138" height="150" style="left:-1px;top:-1px"><g transform="translate(-182,-732)"><rect x="231.3" y="754.8" width="41.1" height="50.4" fill="#2b5b5a"/><rect x="256" y="750" width="11.2" height="13.7" fill="#e2dede"/><rect x="268" y="757" width="4.5" height="6" fill="#d8d0d0"/><rect x="232" y="754" width="6.5" height="10" fill="#301c1c"/><rect x="239.8" y="777" width="4.4" height="26.3" fill="#241818"/><rect x="232.4" y="776" width="2.6" height="27" fill="#1a2a2a"/><rect x="268.2" y="766" width="2.6" height="37" fill="#1a2a2a"/><ellipse cx="237" cy="768.5" rx="2" ry="3" fill="#f0f0f0"/><ellipse cx="237" cy="773.5" rx="2" ry="3" fill="#f0f0f0"/><rect x="235" y="766" width="2" height="10" fill="#000"/><rect x="249.5" y="767" width="3" height="7" rx="1.5" fill="#d8d8d8"/><rect x="241.5" y="761" width="4" height="2" fill="#000"/><rect x="256" y="770" width="3.5" height="3.5" fill="#152020"/><circle cx="235.5" cy="751.5" r="1.3" fill="#6ad46a"/><circle cx="262.3" cy="747.6" r="1.3" fill="#6ad46a"/><circle cx="272.7" cy="756" r="1.3" fill="#6ad46a"/><circle cx="229" cy="781" r="1.3" fill="#6ad46a"/><circle cx="275.5" cy="779" r="1.3" fill="#6ad46a"/><circle cx="228.5" cy="797" r="1.3" fill="#6ad46a"/><circle cx="275" cy="795" r="1.3" fill="#6ad46a"/><circle cx="254" cy="807" r="1.3" fill="#6ad46a"/><circle cx="242.3" cy="782" r="1.3" fill="#6ad46a"/></g></svg><div class="lbl" style="top:102.95px;left:13.3px;transform:scaleX(0.994);transform-origin:0 0">Arduino Uno</div></div>
<div class="card" style="left:330px;top:732px"><svg width="138" height="150" style="left:-1px;top:-1px"><g transform="translate(-330,-732)"><rect x="364" y="748.2" width="72.9" height="27.7" fill="#2a5b59"/><rect x="364" y="778.6" width="72.9" height="29.1" fill="#2a5b59"/><circle cx="372.30" cy="750.5" r="1.3" fill="#d8e0d8"/><circle cx="372.30" cy="773.8" r="1.3" fill="#d8e0d8"/><circle cx="371.30" cy="781" r="0.9" fill="#b85040"/><circle cx="371.30" cy="806" r="0.9" fill="#b85040"/><circle cx="376.49" cy="750.5" r="1.3" fill="#d8e0d8"/><circle cx="376.49" cy="773.8" r="1.3" fill="#d8e0d8"/><circle cx="375.49" cy="781" r="0.9" fill="#b85040"/><circle cx="375.49" cy="806" r="0.9" fill="#b85040"/><circle cx="380.68" cy="750.5" r="1.3" fill="#d8e0d8"/><circle cx="380.68" cy="773.8" r="1.3" fill="#d8e0d8"/><circle cx="379.68" cy="781" r="0.9" fill="#b85040"/><circle cx="379.68" cy="806" r="0.9" fill="#b85040"/><circle cx="384.87" cy="750.5" r="1.3" fill="#d8e0d8"/><circle cx="384.87" cy="773.8" r="1.3" fill="#d8e0d8"/><circle cx="383.87" cy="781" r="0.9" fill="#b85040"/><circle cx="383.87" cy="806" r="0.9" fill="#b85040"/><circle cx="389.06" cy="750.5" r="1.3" fill="#d8e0d8"/><circle cx="389.06" cy="773.8" r="1.3" fill="#d8e0d8"/><circle cx="388.06" cy="781" r="0.9" fill="#b85040"/><circle cx="388.06" cy="806" r="0.9" fill="#b85040"/><circle cx="393.25" cy="750.5" r="1.3" fill="#d8e0d8"/><circle cx="393.25" cy="773.8" r="1.3" fill="#d8e0d8"/><circle cx="392.25" cy="781" r="0.9" fill="#b85040"/><circle cx="392.25" cy="806" r="0.9" fill="#b85040"/><circle cx="397.44" cy="750.5" r="1.3" fill="#d8e0d8"/><circle cx="397.44" cy="773.8" r="1.3" fill="#d8e0d8"/><circle cx="396.44" cy="781" r="0.9" fill="#b85040"/><circle cx="396.44" cy="806" r="0.9" fill="#b85040"/><circle cx="401.63" cy="750.5" r="1.3" fill="#d8e0d8"/><circle cx="401.63" cy="773.8" r="1.3" fill="#d8e0d8"/><circle cx="400.63" cy="781" r="0.9" fill="#b85040"/><circle cx="400.63" cy="806" r="0.9" fill="#b85040"/><circle cx="405.82" cy="750.5" r="1.3" fill="#d8e0d8"/><circle cx="405.82" cy="773.8" r="1.3" fill="#d8e0d8"/><circle cx="404.82" cy="781" r="0.9" fill="#b85040"/><circle cx="404.82" cy="806" r="0.9" fill="#b85040"/><circle cx="410.01" cy="750.5" r="1.3" fill="#d8e0d8"/><circle cx="410.01" cy="773.8" r="1.3" fill="#d8e0d8"/><circle cx="409.01" cy="781" r="0.9" fill="#b85040"/><circle cx="409.01" cy="806" r="0.9" fill="#b85040"/><circle cx="414.20" cy="750.5" r="1.3" fill="#d8e0d8"/><circle cx="414.20" cy="773.8" r="1.3" fill="#d8e0d8"/><circle cx="413.20" cy="781" r="0.9" fill="#b85040"/><circle cx="413.20" cy="806" r="0.9" fill="#b85040"/><circle cx="418.39" cy="750.5" r="1.3" fill="#d8e0d8"/><circle cx="418.39" cy="773.8" r="1.3" fill="#d8e0d8"/><circle cx="417.39" cy="781" r="0.9" fill="#b85040"/><circle cx="417.39" cy="806" r="0.9" fill="#b85040"/><circle cx="422.58" cy="750.5" r="1.3" fill="#d8e0d8"/><circle cx="422.58" cy="773.8" r="1.3" fill="#d8e0d8"/><circle cx="421.58" cy="781" r="0.9" fill="#b85040"/><circle cx="421.58" cy="806" r="0.9" fill="#b85040"/><circle cx="426.77" cy="750.5" r="1.3" fill="#d8e0d8"/><circle cx="426.77" cy="773.8" r="1.3" fill="#d8e0d8"/><circle cx="425.77" cy="781" r="0.9" fill="#b85040"/><circle cx="425.77" cy="806" r="0.9" fill="#b85040"/><circle cx="430.96" cy="750.5" r="1.3" fill="#d8e0d8"/><circle cx="430.96" cy="773.8" r="1.3" fill="#d8e0d8"/><circle cx="429.96" cy="781" r="0.9" fill="#b85040"/><circle cx="429.96" cy="806" r="0.9" fill="#b85040"/><path d="M391.3,753 L400.3,762 L391.3,771 L382.3,762 Z" fill="#111"/><rect x="362.3" y="756.2" width="14.8" height="12.1" fill="#cfcfcf"/><rect x="366" y="759" width="7" height="6" fill="#a8a8a8"/><rect x="404.8" y="759.3" width="5.4" height="5.4" fill="#dcdcdc"/><circle cx="407.5" cy="762" r="1" fill="#111"/><rect x="415.5" y="754" width="4" height="1.8" fill="#e0e0e0"/><rect x="415.5" y="758.5" width="4" height="1.8" fill="#e0e0e0"/><rect x="415.5" y="765" width="4" height="1.8" fill="#e0e0e0"/><rect x="415.5" y="769.5" width="4" height="1.8" fill="#e0e0e0"/><rect x="431" y="757" width="4" height="9" fill="#3a2a2a"/><rect x="372.6" y="789.7" width="18.7" height="6.9" fill="#111"/><rect x="365" y="786" width="3.5" height="1.8" fill="#e8a898"/><rect x="365.5" y="792" width="3" height="1.8" fill="#e0e0e0"/><rect x="365.5" y="798" width="3" height="1.8" fill="#e0e0e0"/><rect x="362.5" y="791" width="1.5" height="7" fill="#d0d0e0"/><rect x="392" y="791" width="3" height="1.6" fill="#e0e0e0"/><rect x="392" y="794" width="3" height="1.6" fill="#e0e0e0"/><rect x="407" y="789" width="1" height="9" fill="#000"/><rect x="423" y="792" width="3.5" height="9" fill="#000"/><rect x="424" y="789" width="4" height="2" fill="#e8b0a0"/><g fill="#d8e0e0"><rect x="431" y="790" width="2" height="2"/><rect x="434" y="790" width="2" height="2"/><rect x="431" y="793.5" width="2" height="2"/><rect x="434" y="793.5" width="2" height="2"/><rect x="431" y="797" width="2" height="2"/><rect x="434" y="797" width="2" height="2"/></g></g></svg><div class="lbl" style="top:102.95px;left:13.3px;transform:scaleX(1.000);transform-origin:0 0">Arduino Nano</div></div>
<div class="card" style="left:478px;top:732px"><svg width="138" height="150" style="left:-1px;top:-1px"><g transform="translate(-478,-732)"><line x1="532" y1="764.7" x2="537" y2="764.7" stroke="#1c2a6a" stroke-width="1.6"/><line x1="517" y1="773" x2="537" y2="773" stroke="#1c2a6a" stroke-width="1.6"/><line x1="510" y1="782" x2="537" y2="782" stroke="#1c2a6a" stroke-width="1.6"/><line x1="526" y1="789.9" x2="537" y2="789.9" stroke="#1c2a6a" stroke-width="1.6"/><line x1="573" y1="764.7" x2="582" y2="764.7" stroke="#1c2a6a" stroke-width="1.6"/><line x1="573" y1="773" x2="590" y2="773" stroke="#1c2a6a" stroke-width="1.6"/><line x1="573" y1="789.9" x2="583" y2="789.9" stroke="#1c2a6a" stroke-width="1.6"/><rect x="537.5" y="762.5" width="4.5" height="4.4" fill="#5a1a1e"/><rect x="569.2" y="762.5" width="4.5" height="4.4" fill="#5a1a1e"/><rect x="537.5" y="770.8" width="4.5" height="4.4" fill="#5a1a1e"/><rect x="569.2" y="770.8" width="4.5" height="4.4" fill="#5a1a1e"/><rect x="537.5" y="779.8" width="4.5" height="4.4" fill="#5a1a1e"/><rect x="569.2" y="779.8" width="4.5" height="4.4" fill="#5a1a1e"/><rect x="537.5" y="787.6999999999999" width="4.5" height="4.4" fill="#5a1a1e"/><rect x="569.2" y="787.6999999999999" width="4.5" height="4.4" fill="#5a1a1e"/><rect x="541.9" y="760" width="27.4" height="34.8" fill="#cdd9c8"/><rect x="540.5" y="768.0" width="2" height="2.6" fill="#16302a"/><rect x="568.8" y="768.0" width="2" height="2.6" fill="#16302a"/><rect x="540.5" y="776.1" width="2" height="2.6" fill="#16302a"/><rect x="568.8" y="776.1" width="2" height="2.6" fill="#16302a"/><rect x="540.5" y="784.3000000000001" width="2" height="2.6" fill="#16302a"/><rect x="568.8" y="784.3000000000001" width="2" height="2.6" fill="#16302a"/><path d="M549.5,769.3 V783.4 L563.4,776.3 Z" fill="#e6d2d2" stroke="#3a3a3a" stroke-width="0.8" stroke-dasharray="1.2,0.8"/><path d="M543,773 H549.5 M543,789 H559.5 V780 M565,779 V790 H569" fill="none" stroke="#b8b0a0" stroke-width="0.6"/></g></svg><div class="lbl" style="top:102.95px;left:13.3px;transform:scaleX(0.953);transform-origin:0 0">LM386</div></div>
<div class="card" style="left:34px;top:892px"><svg width="138" height="150" style="left:-1px;top:-1px"><g transform="translate(-34,-892)">
<circle cx="107.7" cy="935.9" r="18.7" fill="#a67776"/>
<g stroke="#f2c2a2" stroke-width="1.1" fill="none">
<line x1="83.1" y1="935.9" x2="105.9" y2="935.9"/>
<line x1="106" y1="930.8" x2="106" y2="942"/>
<line x1="108.3" y1="930.8" x2="108.3" y2="942"/>
<path d="M108.5,932.5 L116.5,928 V914"/>
<path d="M108.5,939.5 L116.5,943 V957"/>
</g>
<path d="M86,941 Q89,958 104,960 L113,960" fill="none" stroke="#707878" stroke-width="0.8"/>
<path d="M120,915 Q126,922 127,930" fill="none" stroke="#7a3040" stroke-width="0.8"/>
<text x="121" y="917" font-family="Liberation Sans" font-size="9" fill="#18c0c4">C</text>
<text x="74" y="946" font-family="Liberation Sans" font-weight="bold" font-size="9.5" fill="#18b8bc">G</text>
<text x="122" y="959" font-family="Liberation Sans" font-size="9" fill="#18c0c4">E</text>
<text x="128.5" y="940" font-family="Liberation Sans" font-size="6.5" fill="#d8d8d8">V<tspan font-size="4">ce</tspan></text>
<text x="90.5" y="958" font-family="Liberation Sans" font-size="6.5" fill="#d8d8d8">V<tspan font-size="4">ge</tspan></text>
<circle cx="117.5" cy="910" r="1.6" fill="#c8c830"/>
<circle cx="76" cy="930" r="1.6" fill="#c8c830"/>
<circle cx="119.5" cy="960.5" r="1.6" fill="#c8c830"/>
</g></svg><div class="lbl" style="top:102.95px;left:13.3px;transform:scaleX(0.817);transform-origin:0 0">IGBJT</div></div>
<div class="card" style="left:182px;top:892px"><svg width="138" height="150" style="left:-1px;top:-1px"><g transform="translate(-182,-892)"><line x1="220.9" y1="927.8" x2="240" y2="927.8" stroke="#bdc7cb" stroke-width="1.9"/><line x1="220.2" y1="948" x2="240" y2="948" stroke="#bdc7cb" stroke-width="1.9"/><path d="M239.9,922.1 H261 A15,15.3 0 0 1 261,952.7 H239.9 Z" fill="#bdc7cb"/><line x1="275" y1="937.4" x2="288.7" y2="937.4" stroke="#bdc7cb" stroke-width="1.9"/><text x="216.5" y="930.3" text-anchor="middle" font-family="Liberation Sans" font-size="7.2" fill="#d8d4c0">A</text><text x="216.8" y="950.8" text-anchor="middle" font-family="Liberation Sans" font-size="7.2" fill="#e0dcc8">B</text><text x="286.5" y="934.6" text-anchor="middle" font-family="Liberation Sans" font-size="7.2" fill="#d8d4c0">Q</text></g></svg><div class="lbl" style="top:102.95px;left:13.3px;transform:scaleX(0.972);transform-origin:0 0">AND gate</div></div>
<div class="card" style="left:330px;top:892px"><svg width="138" height="150" style="left:-1px;top:-1px"><g transform="translate(-330,-892)"><line x1="369.8" y1="928.5" x2="393" y2="928.5" stroke="#bdc7cb" stroke-width="1.9"/><line x1="369.8" y1="948" x2="393" y2="948" stroke="#bdc7cb" stroke-width="1.9"/><path d="M389.4,922.6 Q410,921.5 426.2,937.8 Q410,954 389.4,953.1 Q396.5,937.8 389.4,922.6 Z" fill="#bdc7cb"/><line x1="425" y1="937.8" x2="437.1" y2="937.8" stroke="#bdc7cb" stroke-width="1.9"/><text x="364.3" y="931.3" text-anchor="middle" font-family="Liberation Sans" font-size="7.2" fill="#d8d4c0">A</text><text x="364.8" y="950.6" text-anchor="middle" font-family="Liberation Sans" font-size="7.2" fill="#e0dcc8">B</text><text x="433.5" y="935.2" text-anchor="middle" font-family="Liberation Sans" font-size="7.2" fill="#d8d4c0">Q</text></g></svg><div class="lbl" style="top:102.95px;left:13.3px;transform:scaleX(0.946);transform-origin:0 0">OR gate</div></div>
<div class="card" style="left:478px;top:892px"><svg width="138" height="150" style="left:-1px;top:-1px"><g transform="translate(-478,-892)"><line x1="516.9" y1="927.8" x2="536" y2="927.8" stroke="#bdc7cb" stroke-width="1.9"/><line x1="516.2" y1="948" x2="536" y2="948" stroke="#bdc7cb" stroke-width="1.9"/><path d="M535.9,922.1 H557 A15,15.3 0 0 1 557,952.7 H535.9 Z" fill="#bdc7cb"/><circle cx="574.3" cy="937.2" r="2.3" fill="#bdc7cb"/><line x1="576" y1="937.4" x2="584.7" y2="937.4" stroke="#bdc7cb" stroke-width="1.9"/><text x="512.5" y="930.3" text-anchor="middle" font-family="Liberation Sans" font-size="7.2" fill="#d8d4c0">A</text><text x="512.8" y="950.8" text-anchor="middle" font-family="Liberation Sans" font-size="7.2" fill="#e0dcc8">B</text><text x="582.5" y="934.6" text-anchor="middle" font-family="Liberation Sans" font-size="7.2" fill="#d8d4c0">Q</text></g></svg><div class="lbl" style="top:102.95px;left:13.3px;transform:scaleX(0.981);transform-origin:0 0">NAND gate</div></div>
<div style="position:absolute;left:616px;top:100px;width:1.6px;height:575px;background:#15181a"></div>
<div style="position:absolute;left:640px;top:89px;width:1265px;height:924px;background:#273239;overflow:hidden">
</div>
<div class="para" style="top:137.80px;font-size:19.9px;line-height:26.4px"><span class="jl">Full wave rectifier converts both the negative and positive half wave form of the ac to a unidirectional current. In the circuit below when</span><span class="jl">the ac is positive diode 1 conducts and allows half of the ac current to pass, when the ac is negative diode 1 blocks the current but diode 2</span><span class="jl">conducts and turned the negative half of the waveform in positive direction. It gives a higher average voltage. The output of the circuit is a</span><span style="display:block;white-space:nowrap">pulsating dc, a capacitor can be used to smooth the pulsating dc.</span></div>
<div class="t" style="left:684px;top:243.77px;font-size:20px;line-height:26px;color:#f2f2f2">Bridge rectifier</div>
<div class="para" style="top:542.10px;font-size:19.9px;line-height:26.4px"><span class="jl">In the above circuit. the capacitor is used to smooth the output waveform. The higher the value of the capacitor the more smoothed the</span><span class="jl">output dc will be. The transformer in the circuit is used to step down the voltage before it is rectified, which is always a good idea. The</span><span style="display:block;white-space:nowrap">other circuit is called bridge rectifier.</span></div>
<div class="t" style="left:662px;top:666.56px;font-size:23.2px;line-height:30px;letter-spacing:-0.2px;color:#8cc43c">Common rectifier diodes</div>
<svg style="position:absolute;left:0;top:0" width="1918" height="1013"><path d="M1223.2,89 V102.6 H1228.5 Q1234,102.6 1234,95.5 V89" fill="none" stroke="#26e026" stroke-width="2.6"/><path d="M1238.5,96.5 Q1239.5,92.8 1242,92.8 Q1245.3,92.8 1245.3,97.5 Q1245.3,101.5 1238.6,112 H1246.2" fill="none" stroke="#26e026" stroke-width="1.9"/><rect x="1063.8" y="318" width="5.8" height="107.7" fill="#8c8c8c"/><path d="M1026,306.6 H1046 C1053,306.6 1058.0,315.80 1058.00,321.80 L1058.00,322.20 L1057.98,322.59 L1057.96,322.99 L1057.93,323.38 L1057.89,323.78 L1057.84,324.17 L1057.78,324.56 L1057.71,324.95 L1057.63,325.34 L1057.54,325.72 L1057.45,326.10 L1057.35,326.48 L1057.24,326.85 L1057.11,327.23 L1056.99,327.60 L1056.85,327.96 L1056.70,328.32 L1056.55,328.68 L1056.39,329.03 L1056.22,329.37 L1056.05,329.71 L1055.87,330.05 L1055.68,330.38 L1055.48,330.70 L1055.28,331.02 L1055.07,331.33 L1054.85,331.64 L1054.63,331.94 L1054.40,332.23 L1054.17,332.52 L1053.93,332.80 L1053.68,333.07 L1053.43,333.33 L1053.18,333.59 L1052.92,333.84 L1052.66,334.08 L1052.39,334.32 L1052.12,334.54 L1051.85,334.76 L1051.57,334.97 L1051.29,335.17 L1051.01,335.36 L1050.73,335.55 L1050.44,335.72 L1050.15,335.89 L1049.87,336.05 L1049.58,336.20 L1049.28,336.34 L1048.99,336.48 L1048.70,336.60 L1048.41,336.72 L1048.12,336.82 L1047.82,336.92 L1047.53,337.01 L1047.25,337.09 L1046.96,337.16 L1046.67,337.23 L1046.39,337.28 L1046.11,337.33 L1045.83,337.37 L1045.55,337.40 L1045.28,337.42 L1045.01,337.44 L1044.74,337.44 L1044.48,337.44 L1044.22,337.43 L1043.97,337.41 L1043.72,337.39 L1043.47,337.36 L1043.23,337.32 L1043.00,337.27 L1042.77,337.22 L1042.55,337.16 L1042.33,337.09 L1042.12,337.02 L1041.92,336.94 L1041.72,336.86 L1041.53,336.77 L1041.35,336.67 L1041.18,336.57 L1041.01,336.47 L1040.85,336.36 L1040.70,336.24 L1040.55,336.12 L1040.41,336.00 L1040.29,335.87 L1040.16,335.73 L1040.05,335.60 L1039.95,335.46 L1039.86,335.32 L1039.77,335.18 L1039.69,335.03 L1039.62,334.88 L1039.56,334.73 L1039.51,334.58 L1039.47,334.42 L1039.44,334.27 L1039.42,334.11 L1039.40,333.96 L1039.40,333.80 L1039.40,333.64 L1039.42,333.49 L1039.44,333.33 L1039.47,333.18 L1039.51,333.02 L1039.56,332.87 L1039.62,332.72 L1039.69,332.57 L1039.77,332.42 L1039.86,332.28 L1039.95,332.14 L1040.05,332.00 L1040.16,331.87 L1040.29,331.73 L1040.41,331.60 L1040.55,331.48 L1040.70,331.36 L1040.85,331.24 L1041.01,331.13 L1041.18,331.03 L1041.35,330.93 L1041.53,330.83 L1041.72,330.74 L1041.92,330.66 L1042.12,330.58 L1042.33,330.51 L1042.55,330.44 L1042.77,330.38 L1043.00,330.33 L1043.23,330.28 L1043.47,330.24 L1043.72,330.21 L1043.97,330.19 L1044.22,330.17 L1044.48,330.16 L1044.74,330.16 L1045.01,330.16 L1045.28,330.18 L1045.55,330.20 L1045.83,330.23 L1046.11,330.27 L1046.39,330.32 L1046.67,330.37 L1046.96,330.44 L1047.25,330.51 L1047.53,330.59 L1047.82,330.68 L1048.12,330.78 L1048.41,330.88 L1048.70,331.00 L1048.99,331.12 L1049.28,331.26 L1049.58,331.40 L1049.87,331.55 L1050.15,331.71 L1050.44,331.88 L1050.73,332.05 L1051.01,332.24 L1051.29,332.43 L1051.57,332.63 L1051.85,332.84 L1052.12,333.06 L1052.39,333.28 L1052.66,333.52 L1052.92,333.76 L1053.18,334.01 L1053.43,334.27 L1053.68,334.53 L1053.93,334.80 L1054.17,335.08 L1054.40,335.37 L1054.63,335.66 L1054.85,335.96 L1055.07,336.27 L1055.28,336.58 L1055.48,336.90 L1055.68,337.22 L1055.87,337.55 L1056.05,337.89 L1056.22,338.23 L1056.39,338.57 L1056.55,338.92 L1056.70,339.28 L1056.85,339.64 L1056.99,340.00 L1057.11,340.37 L1057.24,340.75 L1057.35,341.12 L1057.45,341.50 L1057.54,341.88 L1057.63,342.26 L1057.71,342.65 L1057.78,343.04 L1057.84,343.43 L1057.89,343.82 L1057.93,344.22 L1057.96,344.61 L1057.98,345.01 L1058.00,345.40 L1058.00,345.80 L1058.00,346.20 L1057.98,346.59 L1057.96,346.99 L1057.93,347.38 L1057.89,347.78 L1057.84,348.17 L1057.78,348.56 L1057.71,348.95 L1057.63,349.34 L1057.54,349.72 L1057.45,350.10 L1057.35,350.48 L1057.24,350.85 L1057.11,351.23 L1056.99,351.60 L1056.85,351.96 L1056.70,352.32 L1056.55,352.68 L1056.39,353.03 L1056.22,353.37 L1056.05,353.71 L1055.87,354.05 L1055.68,354.38 L1055.48,354.70 L1055.28,355.02 L1055.07,355.33 L1054.85,355.64 L1054.63,355.94 L1054.40,356.23 L1054.17,356.52 L1053.93,356.80 L1053.68,357.07 L1053.43,357.33 L1053.18,357.59 L1052.92,357.84 L1052.66,358.08 L1052.39,358.32 L1052.12,358.54 L1051.85,358.76 L1051.57,358.97 L1051.29,359.17 L1051.01,359.36 L1050.73,359.55 L1050.44,359.72 L1050.15,359.89 L1049.87,360.05 L1049.58,360.20 L1049.28,360.34 L1048.99,360.48 L1048.70,360.60 L1048.41,360.72 L1048.12,360.82 L1047.82,360.92 L1047.53,361.01 L1047.25,361.09 L1046.96,361.16 L1046.67,361.23 L1046.39,361.28 L1046.11,361.33 L1045.83,361.37 L1045.55,361.40 L1045.28,361.42 L1045.01,361.44 L1044.74,361.44 L1044.48,361.44 L1044.22,361.43 L1043.97,361.41 L1043.72,361.39 L1043.47,361.36 L1043.23,361.32 L1043.00,361.27 L1042.77,361.22 L1042.55,361.16 L1042.33,361.09 L1042.12,361.02 L1041.92,360.94 L1041.72,360.86 L1041.53,360.77 L1041.35,360.67 L1041.18,360.57 L1041.01,360.47 L1040.85,360.36 L1040.70,360.24 L1040.55,360.12 L1040.41,360.00 L1040.29,359.87 L1040.16,359.73 L1040.05,359.60 L1039.95,359.46 L1039.86,359.32 L1039.77,359.18 L1039.69,359.03 L1039.62,358.88 L1039.56,358.73 L1039.51,358.58 L1039.47,358.42 L1039.44,358.27 L1039.42,358.11 L1039.40,357.96 L1039.40,357.80 L1039.40,357.64 L1039.42,357.49 L1039.44,357.33 L1039.47,357.18 L1039.51,357.02 L1039.56,356.87 L1039.62,356.72 L1039.69,356.57 L1039.77,356.42 L1039.86,356.28 L1039.95,356.14 L1040.05,356.00 L1040.16,355.87 L1040.29,355.73 L1040.41,355.60 L1040.55,355.48 L1040.70,355.36 L1040.85,355.24 L1041.01,355.13 L1041.18,355.03 L1041.35,354.93 L1041.53,354.83 L1041.72,354.74 L1041.92,354.66 L1042.12,354.58 L1042.33,354.51 L1042.55,354.44 L1042.77,354.38 L1043.00,354.33 L1043.23,354.28 L1043.47,354.24 L1043.72,354.21 L1043.97,354.19 L1044.22,354.17 L1044.48,354.16 L1044.74,354.16 L1045.01,354.16 L1045.28,354.18 L1045.55,354.20 L1045.83,354.23 L1046.11,354.27 L1046.39,354.32 L1046.67,354.37 L1046.96,354.44 L1047.25,354.51 L1047.53,354.59 L1047.82,354.68 L1048.12,354.78 L1048.41,354.88 L1048.70,355.00 L1048.99,355.12 L1049.28,355.26 L1049.58,355.40 L1049.87,355.55 L1050.15,355.71 L1050.44,355.88 L1050.73,356.05 L1051.01,356.24 L1051.29,356.43 L1051.57,356.63 L1051.85,356.84 L1052.12,357.06 L1052.39,357.28 L1052.66,357.52 L1052.92,357.76 L1053.18,358.01 L1053.43,358.27 L1053.68,358.53 L1053.93,358.80 L1054.17,359.08 L1054.40,359.37 L1054.63,359.66 L1054.85,359.96 L1055.07,360.27 L1055.28,360.58 L1055.48,360.90 L1055.68,361.22 L1055.87,361.55 L1056.05,361.89 L1056.22,362.23 L1056.39,362.57 L1056.55,362.92 L1056.70,363.28 L1056.85,363.64 L1056.99,364.00 L1057.11,364.37 L1057.24,364.75 L1057.35,365.12 L1057.45,365.50 L1057.54,365.88 L1057.63,366.26 L1057.71,366.65 L1057.78,367.04 L1057.84,367.43 L1057.89,367.82 L1057.93,368.22 L1057.96,368.61 L1057.98,369.01 L1058.00,369.40 L1058.00,369.80 L1058.00,370.20 L1057.98,370.59 L1057.96,370.99 L1057.93,371.38 L1057.89,371.78 L1057.84,372.17 L1057.78,372.56 L1057.71,372.95 L1057.63,373.34 L1057.54,373.72 L1057.45,374.10 L1057.35,374.48 L1057.24,374.85 L1057.11,375.23 L1056.99,375.60 L1056.85,375.96 L1056.70,376.32 L1056.55,376.68 L1056.39,377.03 L1056.22,377.37 L1056.05,377.71 L1055.87,378.05 L1055.68,378.38 L1055.48,378.70 L1055.28,379.02 L1055.07,379.33 L1054.85,379.64 L1054.63,379.94 L1054.40,380.23 L1054.17,380.52 L1053.93,380.80 L1053.68,381.07 L1053.43,381.33 L1053.18,381.59 L1052.92,381.84 L1052.66,382.08 L1052.39,382.32 L1052.12,382.54 L1051.85,382.76 L1051.57,382.97 L1051.29,383.17 L1051.01,383.36 L1050.73,383.55 L1050.44,383.72 L1050.15,383.89 L1049.87,384.05 L1049.58,384.20 L1049.28,384.34 L1048.99,384.48 L1048.70,384.60 L1048.41,384.72 L1048.12,384.82 L1047.82,384.92 L1047.53,385.01 L1047.25,385.09 L1046.96,385.16 L1046.67,385.23 L1046.39,385.28 L1046.11,385.33 L1045.83,385.37 L1045.55,385.40 L1045.28,385.42 L1045.01,385.44 L1044.74,385.44 L1044.48,385.44 L1044.22,385.43 L1043.97,385.41 L1043.72,385.39 L1043.47,385.36 L1043.23,385.32 L1043.00,385.27 L1042.77,385.22 L1042.55,385.16 L1042.33,385.09 L1042.12,385.02 L1041.92,384.94 L1041.72,384.86 L1041.53,384.77 L1041.35,384.67 L1041.18,384.57 L1041.01,384.47 L1040.85,384.36 L1040.70,384.24 L1040.55,384.12 L1040.41,384.00 L1040.29,383.87 L1040.16,383.73 L1040.05,383.60 L1039.95,383.46 L1039.86,383.32 L1039.77,383.18 L1039.69,383.03 L1039.62,382.88 L1039.56,382.73 L1039.51,382.58 L1039.47,382.42 L1039.44,382.27 L1039.42,382.11 L1039.40,381.96 L1039.40,381.80 L1039.40,381.64 L1039.42,381.49 L1039.44,381.33 L1039.47,381.18 L1039.51,381.02 L1039.56,380.87 L1039.62,380.72 L1039.69,380.57 L1039.77,380.42 L1039.86,380.28 L1039.95,380.14 L1040.05,380.00 L1040.16,379.87 L1040.29,379.73 L1040.41,379.60 L1040.55,379.48 L1040.70,379.36 L1040.85,379.24 L1041.01,379.13 L1041.18,379.03 L1041.35,378.93 L1041.53,378.83 L1041.72,378.74 L1041.92,378.66 L1042.12,378.58 L1042.33,378.51 L1042.55,378.44 L1042.77,378.38 L1043.00,378.33 L1043.23,378.28 L1043.47,378.24 L1043.72,378.21 L1043.97,378.19 L1044.22,378.17 L1044.48,378.16 L1044.74,378.16 L1045.01,378.16 L1045.28,378.18 L1045.55,378.20 L1045.83,378.23 L1046.11,378.27 L1046.39,378.32 L1046.67,378.37 L1046.96,378.44 L1047.25,378.51 L1047.53,378.59 L1047.82,378.68 L1048.12,378.78 L1048.41,378.88 L1048.70,379.00 L1048.99,379.12 L1049.28,379.26 L1049.58,379.40 L1049.87,379.55 L1050.15,379.71 L1050.44,379.88 L1050.73,380.05 L1051.01,380.24 L1051.29,380.43 L1051.57,380.63 L1051.85,380.84 L1052.12,381.06 L1052.39,381.28 L1052.66,381.52 L1052.92,381.76 L1053.18,382.01 L1053.43,382.27 L1053.68,382.53 L1053.93,382.80 L1054.17,383.08 L1054.40,383.37 L1054.63,383.66 L1054.85,383.96 L1055.07,384.27 L1055.28,384.58 L1055.48,384.90 L1055.68,385.22 L1055.87,385.55 L1056.05,385.89 L1056.22,386.23 L1056.39,386.57 L1056.55,386.92 L1056.70,387.28 L1056.85,387.64 L1056.99,388.00 L1057.11,388.37 L1057.24,388.75 L1057.35,389.12 L1057.45,389.50 L1057.54,389.88 L1057.63,390.26 L1057.71,390.65 L1057.78,391.04 L1057.84,391.43 L1057.89,391.82 L1057.93,392.22 L1057.96,392.61 L1057.98,393.01 L1058.00,393.40 L1058.00,393.80 L1058.00,394.20 L1057.98,394.59 L1057.96,394.99 L1057.93,395.38 L1057.89,395.78 L1057.84,396.17 L1057.78,396.56 L1057.71,396.95 L1057.63,397.34 L1057.54,397.72 L1057.45,398.10 L1057.35,398.48 L1057.24,398.85 L1057.11,399.23 L1056.99,399.60 L1056.85,399.96 L1056.70,400.32 L1056.55,400.68 L1056.39,401.03 L1056.22,401.37 L1056.05,401.71 L1055.87,402.05 L1055.68,402.38 L1055.48,402.70 L1055.28,403.02 L1055.07,403.33 L1054.85,403.64 L1054.63,403.94 L1054.40,404.23 L1054.17,404.52 L1053.93,404.80 L1053.68,405.07 L1053.43,405.33 L1053.18,405.59 L1052.92,405.84 L1052.66,406.08 L1052.39,406.32 L1052.12,406.54 L1051.85,406.76 L1051.57,406.97 L1051.29,407.17 L1051.01,407.36 L1050.73,407.55 L1050.44,407.72 L1050.15,407.89 L1049.87,408.05 L1049.58,408.20 L1049.28,408.34 L1048.99,408.48 L1048.70,408.60 L1048.41,408.72 L1048.12,408.82 L1047.82,408.92 L1047.53,409.01 L1047.25,409.09 L1046.96,409.16 L1046.67,409.23 L1046.39,409.28 L1046.11,409.33 L1045.83,409.37 L1045.55,409.40 L1045.28,409.42 L1045.01,409.44 L1044.74,409.44 L1044.48,409.44 L1044.22,409.43 L1043.97,409.41 L1043.72,409.39 L1043.47,409.36 L1043.23,409.32 L1043.00,409.27 L1042.77,409.22 L1042.55,409.16 L1042.33,409.09 L1042.12,409.02 L1041.92,408.94 L1041.72,408.86 L1041.53,408.77 L1041.35,408.67 L1041.18,408.57 L1041.01,408.47 L1040.85,408.36 L1040.70,408.24 L1040.55,408.12 L1040.41,408.00 L1040.29,407.87 L1040.16,407.73 L1040.05,407.60 L1039.95,407.46 L1039.86,407.32 L1039.77,407.18 L1039.69,407.03 L1039.62,406.88 L1039.56,406.73 L1039.51,406.58 L1039.47,406.42 L1039.44,406.27 L1039.42,406.11 L1039.40,405.96 L1039.40,405.80 L1039.40,405.64 L1039.42,405.49 L1039.44,405.33 L1039.47,405.18 L1039.51,405.02 L1039.56,404.87 L1039.62,404.72 L1039.69,404.57 L1039.77,404.42 L1039.86,404.28 L1039.95,404.14 L1040.05,404.00 L1040.16,403.87 L1040.29,403.73 L1040.41,403.60 L1040.55,403.48 L1040.70,403.36 L1040.85,403.24 L1041.01,403.13 L1041.18,403.03 L1041.35,402.93 L1041.53,402.83 L1041.72,402.74 L1041.92,402.66 L1042.12,402.58 L1042.33,402.51 L1042.55,402.44 L1042.77,402.38 L1043.00,402.33 L1043.23,402.28 L1043.47,402.24 L1043.72,402.21 L1043.97,402.19 L1044.22,402.17 L1044.48,402.16 L1044.74,402.16 L1045.01,402.16 L1045.28,402.18 L1045.55,402.20 L1045.83,402.23 L1046.11,402.27 L1046.39,402.32 L1046.67,402.37 L1046.96,402.44 L1047.25,402.51 L1047.53,402.59 L1047.82,402.68 L1048.12,402.78 L1048.41,402.88 L1048.70,403.00 L1048.99,403.12 L1049.28,403.26 L1049.58,403.40 L1049.87,403.55 L1050.15,403.71 L1050.44,403.88 L1050.73,404.05 L1051.01,404.24 L1051.29,404.43 L1051.57,404.63 L1051.85,404.84 L1052.12,405.06 L1052.39,405.28 L1052.66,405.52 L1052.92,405.76 L1053.18,406.01 L1053.43,406.27 L1053.68,406.53 L1053.93,406.80 L1054.17,407.08 L1054.40,407.37 L1054.63,407.66 L1054.85,407.96 L1055.07,408.27 L1055.28,408.58 L1055.48,408.90 L1055.68,409.22 L1055.87,409.55 L1056.05,409.89 L1056.22,410.23 L1056.39,410.57 L1056.55,410.92 L1056.70,411.28 L1056.85,411.64 L1056.99,412.00 L1057.11,412.37 L1057.24,412.75 L1057.35,413.12 L1057.45,413.50 L1057.54,413.88 L1057.63,414.26 L1057.71,414.65 L1057.78,415.04 L1057.84,415.43 L1057.89,415.82 L1057.93,416.22 L1057.96,416.61 L1057.98,417.01 L1058.00,417.40 L1058.00,417.80 C1058.00,423.80 1053,433.4 1046,433.4 H1026" fill="none" stroke="#f7dc86" stroke-width="2.5"/><path d="M1236,306.6 H1084 C1077,306.6 1072.70,315.80 1072.70,321.80 L1072.70,322.20 L1072.72,322.59 L1072.74,322.99 L1072.77,323.38 L1072.81,323.78 L1072.86,324.17 L1072.92,324.56 L1072.99,324.95 L1073.07,325.34 L1073.16,325.72 L1073.25,326.10 L1073.35,326.48 L1073.46,326.85 L1073.59,327.23 L1073.71,327.60 L1073.85,327.96 L1074.00,328.32 L1074.15,328.68 L1074.31,329.03 L1074.48,329.37 L1074.65,329.71 L1074.83,330.05 L1075.02,330.38 L1075.22,330.70 L1075.42,331.02 L1075.63,331.33 L1075.85,331.64 L1076.07,331.94 L1076.30,332.23 L1076.53,332.52 L1076.77,332.80 L1077.02,333.07 L1077.27,333.33 L1077.52,333.59 L1077.78,333.84 L1078.04,334.08 L1078.31,334.32 L1078.58,334.54 L1078.85,334.76 L1079.13,334.97 L1079.41,335.17 L1079.69,335.36 L1079.97,335.55 L1080.26,335.72 L1080.55,335.89 L1080.83,336.05 L1081.12,336.20 L1081.42,336.34 L1081.71,336.48 L1082.00,336.60 L1082.29,336.72 L1082.58,336.82 L1082.88,336.92 L1083.17,337.01 L1083.45,337.09 L1083.74,337.16 L1084.03,337.23 L1084.31,337.28 L1084.59,337.33 L1084.87,337.37 L1085.15,337.40 L1085.42,337.42 L1085.69,337.44 L1085.96,337.44 L1086.22,337.44 L1086.48,337.43 L1086.73,337.41 L1086.98,337.39 L1087.23,337.36 L1087.47,337.32 L1087.70,337.27 L1087.93,337.22 L1088.15,337.16 L1088.37,337.09 L1088.58,337.02 L1088.78,336.94 L1088.98,336.86 L1089.17,336.77 L1089.35,336.67 L1089.52,336.57 L1089.69,336.47 L1089.85,336.36 L1090.00,336.24 L1090.15,336.12 L1090.29,336.00 L1090.41,335.87 L1090.54,335.73 L1090.65,335.60 L1090.75,335.46 L1090.84,335.32 L1090.93,335.18 L1091.01,335.03 L1091.08,334.88 L1091.14,334.73 L1091.19,334.58 L1091.23,334.42 L1091.26,334.27 L1091.28,334.11 L1091.30,333.96 L1091.30,333.80 L1091.30,333.64 L1091.28,333.49 L1091.26,333.33 L1091.23,333.18 L1091.19,333.02 L1091.14,332.87 L1091.08,332.72 L1091.01,332.57 L1090.93,332.42 L1090.84,332.28 L1090.75,332.14 L1090.65,332.00 L1090.54,331.87 L1090.41,331.73 L1090.29,331.60 L1090.15,331.48 L1090.00,331.36 L1089.85,331.24 L1089.69,331.13 L1089.52,331.03 L1089.35,330.93 L1089.17,330.83 L1088.98,330.74 L1088.78,330.66 L1088.58,330.58 L1088.37,330.51 L1088.15,330.44 L1087.93,330.38 L1087.70,330.33 L1087.47,330.28 L1087.23,330.24 L1086.98,330.21 L1086.73,330.19 L1086.48,330.17 L1086.22,330.16 L1085.96,330.16 L1085.69,330.16 L1085.42,330.18 L1085.15,330.20 L1084.87,330.23 L1084.59,330.27 L1084.31,330.32 L1084.03,330.37 L1083.74,330.44 L1083.45,330.51 L1083.17,330.59 L1082.88,330.68 L1082.58,330.78 L1082.29,330.88 L1082.00,331.00 L1081.71,331.12 L1081.42,331.26 L1081.12,331.40 L1080.83,331.55 L1080.55,331.71 L1080.26,331.88 L1079.97,332.05 L1079.69,332.24 L1079.41,332.43 L1079.13,332.63 L1078.85,332.84 L1078.58,333.06 L1078.31,333.28 L1078.04,333.52 L1077.78,333.76 L1077.52,334.01 L1077.27,334.27 L1077.02,334.53 L1076.77,334.80 L1076.53,335.08 L1076.30,335.37 L1076.07,335.66 L1075.85,335.96 L1075.63,336.27 L1075.42,336.58 L1075.22,336.90 L1075.02,337.22 L1074.83,337.55 L1074.65,337.89 L1074.48,338.23 L1074.31,338.57 L1074.15,338.92 L1074.00,339.28 L1073.85,339.64 L1073.71,340.00 L1073.59,340.37 L1073.46,340.75 L1073.35,341.12 L1073.25,341.50 L1073.16,341.88 L1073.07,342.26 L1072.99,342.65 L1072.92,343.04 L1072.86,343.43 L1072.81,343.82 L1072.77,344.22 L1072.74,344.61 L1072.72,345.01 L1072.70,345.40 L1072.70,345.80 L1072.70,346.20 L1072.72,346.59 L1072.74,346.99 L1072.77,347.38 L1072.81,347.78 L1072.86,348.17 L1072.92,348.56 L1072.99,348.95 L1073.07,349.34 L1073.16,349.72 L1073.25,350.10 L1073.35,350.48 L1073.46,350.85 L1073.59,351.23 L1073.71,351.60 L1073.85,351.96 L1074.00,352.32 L1074.15,352.68 L1074.31,353.03 L1074.48,353.37 L1074.65,353.71 L1074.83,354.05 L1075.02,354.38 L1075.22,354.70 L1075.42,355.02 L1075.63,355.33 L1075.85,355.64 L1076.07,355.94 L1076.30,356.23 L1076.53,356.52 L1076.77,356.80 L1077.02,357.07 L1077.27,357.33 L1077.52,357.59 L1077.78,357.84 L1078.04,358.08 L1078.31,358.32 L1078.58,358.54 L1078.85,358.76 L1079.13,358.97 L1079.41,359.17 L1079.69,359.36 L1079.97,359.55 L1080.26,359.72 L1080.55,359.89 L1080.83,360.05 L1081.12,360.20 L1081.42,360.34 L1081.71,360.48 L1082.00,360.60 L1082.29,360.72 L1082.58,360.82 L1082.88,360.92 L1083.17,361.01 L1083.45,361.09 L1083.74,361.16 L1084.03,361.23 L1084.31,361.28 L1084.59,361.33 L1084.87,361.37 L1085.15,361.40 L1085.42,361.42 L1085.69,361.44 L1085.96,361.44 L1086.22,361.44 L1086.48,361.43 L1086.73,361.41 L1086.98,361.39 L1087.23,361.36 L1087.47,361.32 L1087.70,361.27 L1087.93,361.22 L1088.15,361.16 L1088.37,361.09 L1088.58,361.02 L1088.78,360.94 L1088.98,360.86 L1089.17,360.77 L1089.35,360.67 L1089.52,360.57 L1089.69,360.47 L1089.85,360.36 L1090.00,360.24 L1090.15,360.12 L1090.29,360.00 L1090.41,359.87 L1090.54,359.73 L1090.65,359.60 L1090.75,359.46 L1090.84,359.32 L1090.93,359.18 L1091.01,359.03 L1091.08,358.88 L1091.14,358.73 L1091.19,358.58 L1091.23,358.42 L1091.26,358.27 L1091.28,358.11 L1091.30,357.96 L1091.30,357.80 L1091.30,357.64 L1091.28,357.49 L1091.26,357.33 L1091.23,357.18 L1091.19,357.02 L1091.14,356.87 L1091.08,356.72 L1091.01,356.57 L1090.93,356.42 L1090.84,356.28 L1090.75,356.14 L1090.65,356.00 L1090.54,355.87 L1090.41,355.73 L1090.29,355.60 L1090.15,355.48 L1090.00,355.36 L1089.85,355.24 L1089.69,355.13 L1089.52,355.03 L1089.35,354.93 L1089.17,354.83 L1088.98,354.74 L1088.78,354.66 L1088.58,354.58 L1088.37,354.51 L1088.15,354.44 L1087.93,354.38 L1087.70,354.33 L1087.47,354.28 L1087.23,354.24 L1086.98,354.21 L1086.73,354.19 L1086.48,354.17 L1086.22,354.16 L1085.96,354.16 L1085.69,354.16 L1085.42,354.18 L1085.15,354.20 L1084.87,354.23 L1084.59,354.27 L1084.31,354.32 L1084.03,354.37 L1083.74,354.44 L1083.45,354.51 L1083.17,354.59 L1082.88,354.68 L1082.58,354.78 L1082.29,354.88 L1082.00,355.00 L1081.71,355.12 L1081.42,355.26 L1081.12,355.40 L1080.83,355.55 L1080.55,355.71 L1080.26,355.88 L1079.97,356.05 L1079.69,356.24 L1079.41,356.43 L1079.13,356.63 L1078.85,356.84 L1078.58,357.06 L1078.31,357.28 L1078.04,357.52 L1077.78,357.76 L1077.52,358.01 L1077.27,358.27 L1077.02,358.53 L1076.77,358.80 L1076.53,359.08 L1076.30,359.37 L1076.07,359.66 L1075.85,359.96 L1075.63,360.27 L1075.42,360.58 L1075.22,360.90 L1075.02,361.22 L1074.83,361.55 L1074.65,361.89 L1074.48,362.23 L1074.31,362.57 L1074.15,362.92 L1074.00,363.28 L1073.85,363.64 L1073.71,364.00 L1073.59,364.37 L1073.46,364.75 L1073.35,365.12 L1073.25,365.50 L1073.16,365.88 L1073.07,366.26 L1072.99,366.65 L1072.92,367.04 L1072.86,367.43 L1072.81,367.82 L1072.77,368.22 L1072.74,368.61 L1072.72,369.01 L1072.70,369.40 L1072.70,369.80 L1072.70,370.20 L1072.72,370.59 L1072.74,370.99 L1072.77,371.38 L1072.81,371.78 L1072.86,372.17 L1072.92,372.56 L1072.99,372.95 L1073.07,373.34 L1073.16,373.72 L1073.25,374.10 L1073.35,374.48 L1073.46,374.85 L1073.59,375.23 L1073.71,375.60 L1073.85,375.96 L1074.00,376.32 L1074.15,376.68 L1074.31,377.03 L1074.48,377.37 L1074.65,377.71 L1074.83,378.05 L1075.02,378.38 L1075.22,378.70 L1075.42,379.02 L1075.63,379.33 L1075.85,379.64 L1076.07,379.94 L1076.30,380.23 L1076.53,380.52 L1076.77,380.80 L1077.02,381.07 L1077.27,381.33 L1077.52,381.59 L1077.78,381.84 L1078.04,382.08 L1078.31,382.32 L1078.58,382.54 L1078.85,382.76 L1079.13,382.97 L1079.41,383.17 L1079.69,383.36 L1079.97,383.55 L1080.26,383.72 L1080.55,383.89 L1080.83,384.05 L1081.12,384.20 L1081.42,384.34 L1081.71,384.48 L1082.00,384.60 L1082.29,384.72 L1082.58,384.82 L1082.88,384.92 L1083.17,385.01 L1083.45,385.09 L1083.74,385.16 L1084.03,385.23 L1084.31,385.28 L1084.59,385.33 L1084.87,385.37 L1085.15,385.40 L1085.42,385.42 L1085.69,385.44 L1085.96,385.44 L1086.22,385.44 L1086.48,385.43 L1086.73,385.41 L1086.98,385.39 L1087.23,385.36 L1087.47,385.32 L1087.70,385.27 L1087.93,385.22 L1088.15,385.16 L1088.37,385.09 L1088.58,385.02 L1088.78,384.94 L1088.98,384.86 L1089.17,384.77 L1089.35,384.67 L1089.52,384.57 L1089.69,384.47 L1089.85,384.36 L1090.00,384.24 L1090.15,384.12 L1090.29,384.00 L1090.41,383.87 L1090.54,383.73 L1090.65,383.60 L1090.75,383.46 L1090.84,383.32 L1090.93,383.18 L1091.01,383.03 L1091.08,382.88 L1091.14,382.73 L1091.19,382.58 L1091.23,382.42 L1091.26,382.27 L1091.28,382.11 L1091.30,381.96 L1091.30,381.80 L1091.30,381.64 L1091.28,381.49 L1091.26,381.33 L1091.23,381.18 L1091.19,381.02 L1091.14,380.87 L1091.08,380.72 L1091.01,380.57 L1090.93,380.42 L1090.84,380.28 L1090.75,380.14 L1090.65,380.00 L1090.54,379.87 L1090.41,379.73 L1090.29,379.60 L1090.15,379.48 L1090.00,379.36 L1089.85,379.24 L1089.69,379.13 L1089.52,379.03 L1089.35,378.93 L1089.17,378.83 L1088.98,378.74 L1088.78,378.66 L1088.58,378.58 L1088.37,378.51 L1088.15,378.44 L1087.93,378.38 L1087.70,378.33 L1087.47,378.28 L1087.23,378.24 L1086.98,378.21 L1086.73,378.19 L1086.48,378.17 L1086.22,378.16 L1085.96,378.16 L1085.69,378.16 L1085.42,378.18 L1085.15,378.20 L1084.87,378.23 L1084.59,378.27 L1084.31,378.32 L1084.03,378.37 L1083.74,378.44 L1083.45,378.51 L1083.17,378.59 L1082.88,378.68 L1082.58,378.78 L1082.29,378.88 L1082.00,379.00 L1081.71,379.12 L1081.42,379.26 L1081.12,379.40 L1080.83,379.55 L1080.55,379.71 L1080.26,379.88 L1079.97,380.05 L1079.69,380.24 L1079.41,380.43 L1079.13,380.63 L1078.85,380.84 L1078.58,381.06 L1078.31,381.28 L1078.04,381.52 L1077.78,381.76 L1077.52,382.01 L1077.27,382.27 L1077.02,382.53 L1076.77,382.80 L1076.53,383.08 L1076.30,383.37 L1076.07,383.66 L1075.85,383.96 L1075.63,384.27 L1075.42,384.58 L1075.22,384.90 L1075.02,385.22 L1074.83,385.55 L1074.65,385.89 L1074.48,386.23 L1074.31,386.57 L1074.15,386.92 L1074.00,387.28 L1073.85,387.64 L1073.71,388.00 L1073.59,388.37 L1073.46,388.75 L1073.35,389.12 L1073.25,389.50 L1073.16,389.88 L1073.07,390.26 L1072.99,390.65 L1072.92,391.04 L1072.86,391.43 L1072.81,391.82 L1072.77,392.22 L1072.74,392.61 L1072.72,393.01 L1072.70,393.40 L1072.70,393.80 L1072.70,394.20 L1072.72,394.59 L1072.74,394.99 L1072.77,395.38 L1072.81,395.78 L1072.86,396.17 L1072.92,396.56 L1072.99,396.95 L1073.07,397.34 L1073.16,397.72 L1073.25,398.10 L1073.35,398.48 L1073.46,398.85 L1073.59,399.23 L1073.71,399.60 L1073.85,399.96 L1074.00,400.32 L1074.15,400.68 L1074.31,401.03 L1074.48,401.37 L1074.65,401.71 L1074.83,402.05 L1075.02,402.38 L1075.22,402.70 L1075.42,403.02 L1075.63,403.33 L1075.85,403.64 L1076.07,403.94 L1076.30,404.23 L1076.53,404.52 L1076.77,404.80 L1077.02,405.07 L1077.27,405.33 L1077.52,405.59 L1077.78,405.84 L1078.04,406.08 L1078.31,406.32 L1078.58,406.54 L1078.85,406.76 L1079.13,406.97 L1079.41,407.17 L1079.69,407.36 L1079.97,407.55 L1080.26,407.72 L1080.55,407.89 L1080.83,408.05 L1081.12,408.20 L1081.42,408.34 L1081.71,408.48 L1082.00,408.60 L1082.29,408.72 L1082.58,408.82 L1082.88,408.92 L1083.17,409.01 L1083.45,409.09 L1083.74,409.16 L1084.03,409.23 L1084.31,409.28 L1084.59,409.33 L1084.87,409.37 L1085.15,409.40 L1085.42,409.42 L1085.69,409.44 L1085.96,409.44 L1086.22,409.44 L1086.48,409.43 L1086.73,409.41 L1086.98,409.39 L1087.23,409.36 L1087.47,409.32 L1087.70,409.27 L1087.93,409.22 L1088.15,409.16 L1088.37,409.09 L1088.58,409.02 L1088.78,408.94 L1088.98,408.86 L1089.17,408.77 L1089.35,408.67 L1089.52,408.57 L1089.69,408.47 L1089.85,408.36 L1090.00,408.24 L1090.15,408.12 L1090.29,408.00 L1090.41,407.87 L1090.54,407.73 L1090.65,407.60 L1090.75,407.46 L1090.84,407.32 L1090.93,407.18 L1091.01,407.03 L1091.08,406.88 L1091.14,406.73 L1091.19,406.58 L1091.23,406.42 L1091.26,406.27 L1091.28,406.11 L1091.30,405.96 L1091.30,405.80 L1091.30,405.64 L1091.28,405.49 L1091.26,405.33 L1091.23,405.18 L1091.19,405.02 L1091.14,404.87 L1091.08,404.72 L1091.01,404.57 L1090.93,404.42 L1090.84,404.28 L1090.75,404.14 L1090.65,404.00 L1090.54,403.87 L1090.41,403.73 L1090.29,403.60 L1090.15,403.48 L1090.00,403.36 L1089.85,403.24 L1089.69,403.13 L1089.52,403.03 L1089.35,402.93 L1089.17,402.83 L1088.98,402.74 L1088.78,402.66 L1088.58,402.58 L1088.37,402.51 L1088.15,402.44 L1087.93,402.38 L1087.70,402.33 L1087.47,402.28 L1087.23,402.24 L1086.98,402.21 L1086.73,402.19 L1086.48,402.17 L1086.22,402.16 L1085.96,402.16 L1085.69,402.16 L1085.42,402.18 L1085.15,402.20 L1084.87,402.23 L1084.59,402.27 L1084.31,402.32 L1084.03,402.37 L1083.74,402.44 L1083.45,402.51 L1083.17,402.59 L1082.88,402.68 L1082.58,402.78 L1082.29,402.88 L1082.00,403.00 L1081.71,403.12 L1081.42,403.26 L1081.12,403.40 L1080.83,403.55 L1080.55,403.71 L1080.26,403.88 L1079.97,404.05 L1079.69,404.24 L1079.41,404.43 L1079.13,404.63 L1078.85,404.84 L1078.58,405.06 L1078.31,405.28 L1078.04,405.52 L1077.78,405.76 L1077.52,406.01 L1077.27,406.27 L1077.02,406.53 L1076.77,406.80 L1076.53,407.08 L1076.30,407.37 L1076.07,407.66 L1075.85,407.96 L1075.63,408.27 L1075.42,408.58 L1075.22,408.90 L1075.02,409.22 L1074.83,409.55 L1074.65,409.89 L1074.48,410.23 L1074.31,410.57 L1074.15,410.92 L1074.00,411.28 L1073.85,411.64 L1073.71,412.00 L1073.59,412.37 L1073.46,412.75 L1073.35,413.12 L1073.25,413.50 L1073.16,413.88 L1073.07,414.26 L1072.99,414.65 L1072.92,415.04 L1072.86,415.43 L1072.81,415.82 L1072.77,416.22 L1072.74,416.61 L1072.72,417.01 L1072.70,417.40 L1072.70,417.80 C1072.70,423.80 1077,433.4 1084,433.4 H1236" fill="none" stroke="#f7dc86" stroke-width="2.5"/><line x1="1125.5" y1="370" x2="1172.2" y2="370" stroke="#f7dc86" stroke-width="2.5"/><line x1="1125.5" y1="369" x2="1125.5" y2="497.2" stroke="#f7dc86" stroke-width="2.5"/><line x1="1172.2" y1="370" x2="1235.3" y2="306.6" stroke="#f7dc86" stroke-width="2.5"/><line x1="1235.3" y1="306.6" x2="1297.5" y2="370" stroke="#f7dc86" stroke-width="2.5"/><line x1="1172.2" y1="370" x2="1235.3" y2="433.2" stroke="#f7dc86" stroke-width="2.5"/><line x1="1235.3" y1="433.2" x2="1297.5" y2="370" stroke="#f7dc86" stroke-width="2.5"/><line x1="1297.5" y1="370" x2="1492" y2="370" stroke="#f7dc86" stroke-width="2.5"/><line x1="1491.5" y1="370" x2="1492" y2="370.8" stroke="#f7dc86" stroke-width="2.5"/><line x1="1349.3" y1="370" x2="1349.3" y2="421.3" stroke="#f7dc86" stroke-width="2.5"/><line x1="1349.3" y1="440.6" x2="1349.3" y2="496.7" stroke="#f7dc86" stroke-width="2.5"/><line x1="1405.7" y1="370" x2="1405.7" y2="410" stroke="#f7dc86" stroke-width="2.5"/><line x1="1405.7" y1="450.8" x2="1405.7" y2="497.4" stroke="#f7dc86" stroke-width="2.5"/><line x1="1494.5" y1="402" x2="1494.5" y2="495.3" stroke="#f7dc86" stroke-width="2.5"/><line x1="1110.5" y1="497.2" x2="1140.5" y2="497.2" stroke="#f7dc86" stroke-width="2.5"/><line x1="1115.5" y1="507.0" x2="1135.5" y2="507.0" stroke="#f7dc86" stroke-width="2.5"/><line x1="1120.5" y1="516.8" x2="1130.5" y2="516.8" stroke="#f7dc86" stroke-width="2.5"/><line x1="1334.3" y1="496.7" x2="1364.3" y2="496.7" stroke="#f7dc86" stroke-width="2.5"/><line x1="1339.3" y1="506.5" x2="1359.3" y2="506.5" stroke="#f7dc86" stroke-width="2.5"/><line x1="1344.3" y1="516.3" x2="1354.3" y2="516.3" stroke="#f7dc86" stroke-width="2.5"/><line x1="1390.7" y1="497.4" x2="1420.7" y2="497.4" stroke="#f7dc86" stroke-width="2.5"/><line x1="1395.7" y1="507.2" x2="1415.7" y2="507.2" stroke="#f7dc86" stroke-width="2.5"/><line x1="1400.7" y1="517.0" x2="1410.7" y2="517.0" stroke="#f7dc86" stroke-width="2.5"/><line x1="1479.5" y1="495.3" x2="1509.5" y2="495.3" stroke="#f7dc86" stroke-width="2.5"/><line x1="1484.5" y1="505.1" x2="1504.5" y2="505.1" stroke="#f7dc86" stroke-width="2.5"/><line x1="1489.5" y1="514.9" x2="1499.5" y2="514.9" stroke="#f7dc86" stroke-width="2.5"/><path d="M1183.7,336.8 L1204.4,357.9 L1211.8,328.3 Z" fill="#383838" stroke="#9e9e9e" stroke-width="2.2" stroke-linejoin="miter"/><line x1="1206.6" y1="322.4" x2="1219.2" y2="335.3" stroke="#9e9e9e" stroke-width="2.2"/><path d="M1269.6,318.7 L1248.6,339.4 L1277,346.8 Z" fill="#383838" stroke="#9e9e9e" stroke-width="2.2" stroke-linejoin="miter"/><line x1="1270.3" y1="354.2" x2="1284.1" y2="341.6" stroke="#9e9e9e" stroke-width="2.2"/><path d="M1205.9,381.6 L1184.4,402.8 L1213.3,410.5 Z" fill="#383838" stroke="#9e9e9e" stroke-width="2.2" stroke-linejoin="miter"/><line x1="1206.6" y1="417.2" x2="1220.4" y2="404.6" stroke="#9e9e9e" stroke-width="2.2"/><path d="M1248.1,399.4 L1269.6,420.9 L1277,391.3 Z" fill="#383838" stroke="#9e9e9e" stroke-width="2.2" stroke-linejoin="miter"/><line x1="1271" y1="385.3" x2="1284.1" y2="397.9" stroke="#9e9e9e" stroke-width="2.2"/><circle cx="1235.3" cy="306.6" r="4.6" fill="#f7dc86"/><circle cx="1172.2" cy="370" r="4.6" fill="#f7dc86"/><circle cx="1297.5" cy="370" r="4.6" fill="#f7dc86"/><circle cx="1235.3" cy="433.2" r="4.6" fill="#f7dc86"/><circle cx="1349.3" cy="370" r="4.6" fill="#f7dc86"/><circle cx="1405.7" cy="370" r="4.6" fill="#f7dc86"/><circle cx="1492" cy="370.8" r="4.6" fill="#f7dc86"/><circle cx="1494.5" cy="402" r="4.6" fill="#f7dc86"/><rect x="1334.3" y="421.8" width="27.8" height="5.8" fill="none" stroke="#7cc444" stroke-width="2"/><rect x="1333.3" y="433" width="29.8" height="7.6" fill="#7cc444"/><path d="M1315.8,418.4 H1330 M1322.9,412.6 V424" stroke="#e8232b" stroke-width="2.6"/><path d="M1322,446.8 H1330" stroke="#e8232b" stroke-width="2.6"/><rect x="1400.6" y="411" width="10" height="38.8" fill="#c6834f" stroke="#e11d1d" stroke-width="2"/><text x="1367" y="442.5" font-family="Liberation Serif" font-size="26.5" fill="#2ee22e" stroke="#2ee22e" stroke-width="0.45" transform="translate(1367,442.5) scale(0.72,1) translate(-1367,-442.5)">C</text><text x="1419.5" y="440.8" font-family="Liberation Serif" font-size="26" fill="#2ee22e" stroke="#2ee22e" stroke-width="0.45" transform="translate(1419.5,440.8) scale(0.78,1) translate(-1419.5,-440.8)">R</text><text x="1437.5" y="453.9" font-family="Liberation Sans" font-size="17.5" fill="#2ee22e" stroke="#2ee22e" stroke-width="0.45" transform="translate(1437.5,453.9) scale(0.8,1) translate(-1437.5,-453.9)">Load</text><text x="1499.5" y="393.9" font-family="Liberation Serif" font-size="23.5" fill="#2ee22e" stroke="#2ee22e" stroke-width="0.45" transform="translate(1499.5,393.9) scale(0.72,1) translate(-1499.5,-393.9)">V</text><text x="1510.5" y="401.9" font-family="Liberation Sans" font-size="16.5" fill="#2ee22e" stroke="#2ee22e" stroke-width="0.45" transform="translate(1510.5,401.9) scale(0.85,1) translate(-1510.5,-401.9)">in</text></svg>
<svg style="position:absolute;left:0;top:0" width="1918" height="1013"><rect x="1023" y="718" width="500" height="300" fill="#ffffff"/><rect x="1027.7" y="822.1" width="490.3" height="40.799999999999955" fill="#e2efd9"/><rect x="1027.7" y="904.5" width="490.3" height="41.60000000000002" fill="#e2efd9"/><rect x="1027.7" y="987.4" width="490.3" height="25.600000000000023" fill="#e2efd9"/><line x1="1027.7" y1="723.4" x2="1027.7" y2="1013" stroke="#b2cc9c" stroke-width="1"/><line x1="1127.9" y1="723.4" x2="1127.9" y2="1013" stroke="#b2cc9c" stroke-width="1"/><line x1="1240.6" y1="723.4" x2="1240.6" y2="1013" stroke="#b2cc9c" stroke-width="1"/><line x1="1339.4" y1="723.4" x2="1339.4" y2="1013" stroke="#b2cc9c" stroke-width="1"/><line x1="1425.2" y1="723.4" x2="1425.2" y2="1013" stroke="#b2cc9c" stroke-width="1"/><line x1="1517.8" y1="723.4" x2="1517.8" y2="1013" stroke="#b2cc9c" stroke-width="1"/><line x1="1027.2" y1="723.4" x2="1518.3" y2="723.4" stroke="#b2cc9c" stroke-width="1"/><line x1="1027.2" y1="821.8" x2="1518.3" y2="821.8" stroke="#8cc06a" stroke-width="2.4"/><line x1="1027.2" y1="862.9" x2="1518.3" y2="862.9" stroke="#b2cc9c" stroke-width="1"/><line x1="1027.2" y1="904.5" x2="1518.3" y2="904.5" stroke="#b2cc9c" stroke-width="1"/><line x1="1027.2" y1="946.1" x2="1518.3" y2="946.1" stroke="#b2cc9c" stroke-width="1"/><line x1="1027.2" y1="987.4" x2="1518.3" y2="987.4" stroke="#b2cc9c" stroke-width="1"/><text x="1077.8" y="744.1" text-anchor="middle" font-family="Liberation Sans" font-weight="bold" font-size="16.6" fill="#c8232e" letter-spacing="0">Part</text><text x="1077.8" y="766.9" text-anchor="middle" font-family="Liberation Sans" font-weight="bold" font-size="16.6" fill="#c8232e" letter-spacing="0">number</text><text x="1184.2" y="744.1" text-anchor="middle" font-family="Liberation Sans" font-weight="bold" font-size="16.6" fill="#c8232e" letter-spacing="0">Peak</text><text x="1184.2" y="766.9" text-anchor="middle" font-family="Liberation Sans" font-weight="bold" font-size="16.6" fill="#c8232e" letter-spacing="0">inverse</text><text x="1184.2" y="789.7" text-anchor="middle" font-family="Liberation Sans" font-weight="bold" font-size="16.6" fill="#c8232e" letter-spacing="0">voltage(PIV)</text><text x="1290.0" y="744.1" text-anchor="middle" font-family="Liberation Sans" font-weight="bold" font-size="16.6" fill="#c8232e" letter-spacing="0">Average</text><text x="1290.0" y="766.9" text-anchor="middle" font-family="Liberation Sans" font-weight="bold" font-size="16.6" fill="#c8232e" letter-spacing="0">forward</text><text x="1290.0" y="789.7" text-anchor="middle" font-family="Liberation Sans" font-weight="bold" font-size="16.6" fill="#c8232e" letter-spacing="0">current</text><text x="1290.0" y="812.5" text-anchor="middle" font-family="Liberation Sans" font-weight="bold" font-size="16.6" fill="#c8232e" letter-spacing="0">(mA)</text><text x="1382.3" y="744.1" text-anchor="middle" font-family="Liberation Sans" font-weight="bold" font-size="16.6" fill="#c8232e" letter-spacing="0">Surge</text><text x="1382.3" y="766.9" text-anchor="middle" font-family="Liberation Sans" font-weight="bold" font-size="16.6" fill="#c8232e" letter-spacing="0">current</text><text x="1471.5" y="744.1" text-anchor="middle" font-family="Liberation Sans" font-weight="bold" font-size="16.6" fill="#c8232e" letter-spacing="0">Forward</text><text x="1471.5" y="766.9" text-anchor="middle" font-family="Liberation Sans" font-weight="bold" font-size="16.6" fill="#c8232e" letter-spacing="0">voltage</text><text x="1471.5" y="789.7" text-anchor="middle" font-family="Liberation Sans" font-weight="bold" font-size="16.6" fill="#c8232e" letter-spacing="0">drop</text><text x="1035.5" y="846.6" font-family="Liberation Sans" font-size="20.3" fill="#1c1c1c">1N4001</text><text x="1135.3" y="846.6" font-family="Liberation Sans" font-size="20.3" fill="#1c1c1c">50</text><text x="1248.2" y="846.6" font-family="Liberation Sans" font-size="20.3" fill="#1c1c1c">1000</text><text x="1347" y="846.6" font-family="Liberation Sans" font-size="20.3" fill="#1c1c1c">30</text><text x="1433.2" y="846.6" font-family="Liberation Sans" font-size="20.3" fill="#1c1c1c">1.1</text><text x="1035.5" y="887.9" font-family="Liberation Sans" font-size="20.3" fill="#1c1c1c">1N4002</text><text x="1135.3" y="887.9" font-family="Liberation Sans" font-size="20.3" fill="#1c1c1c">100</text><text x="1248.2" y="887.9" font-family="Liberation Sans" font-size="20.3" fill="#1c1c1c">1000</text><text x="1347" y="887.9" font-family="Liberation Sans" font-size="20.3" fill="#1c1c1c">30</text><text x="1433.2" y="887.9" font-family="Liberation Sans" font-size="20.3" fill="#1c1c1c">1.1</text><text x="1035.5" y="929.2" font-family="Liberation Sans" font-size="20.3" fill="#1c1c1c">1N4003</text><text x="1135.3" y="929.2" font-family="Liberation Sans" font-size="20.3" fill="#1c1c1c">200</text><text x="1248.2" y="929.2" font-family="Liberation Sans" font-size="20.3" fill="#1c1c1c">1000</text><text x="1347" y="929.2" font-family="Liberation Sans" font-size="20.3" fill="#1c1c1c">30</text><text x="1433.2" y="929.2" font-family="Liberation Sans" font-size="20.3" fill="#1c1c1c">1.1</text><text x="1035.5" y="970.5" font-family="Liberation Sans" font-size="20.3" fill="#1c1c1c">1N4004</text><text x="1135.3" y="970.5" font-family="Liberation Sans" font-size="20.3" fill="#1c1c1c">400</text><text x="1248.2" y="970.5" font-family="Liberation Sans" font-size="20.3" fill="#1c1c1c">1000</text><text x="1347" y="970.5" font-family="Liberation Sans" font-size="20.3" fill="#1c1c1c">30</text><text x="1433.2" y="970.5" font-family="Liberation Sans" font-size="20.3" fill="#1c1c1c">1.1</text><text x="1035.5" y="1011.8" font-family="Liberation Sans" font-size="20.3" fill="#1c1c1c">1N4005</text><text x="1135.3" y="1011.8" font-family="Liberation Sans" font-size="20.3" fill="#1c1c1c">600</text><text x="1248.2" y="1011.8" font-family="Liberation Sans" font-size="20.3" fill="#1c1c1c">1000</text><text x="1347" y="1011.8" font-family="Liberation Sans" font-size="20.3" fill="#1c1c1c">30</text><text x="1433.2" y="1011.8" font-family="Liberation Sans" font-size="20.3" fill="#1c1c1c">1.1</text></svg>
<div style="position:absolute;left:1897.5px;top:731px;width:2.5px;height:203px;border-radius:1px;background:#18222a"></div>
</body></html>
